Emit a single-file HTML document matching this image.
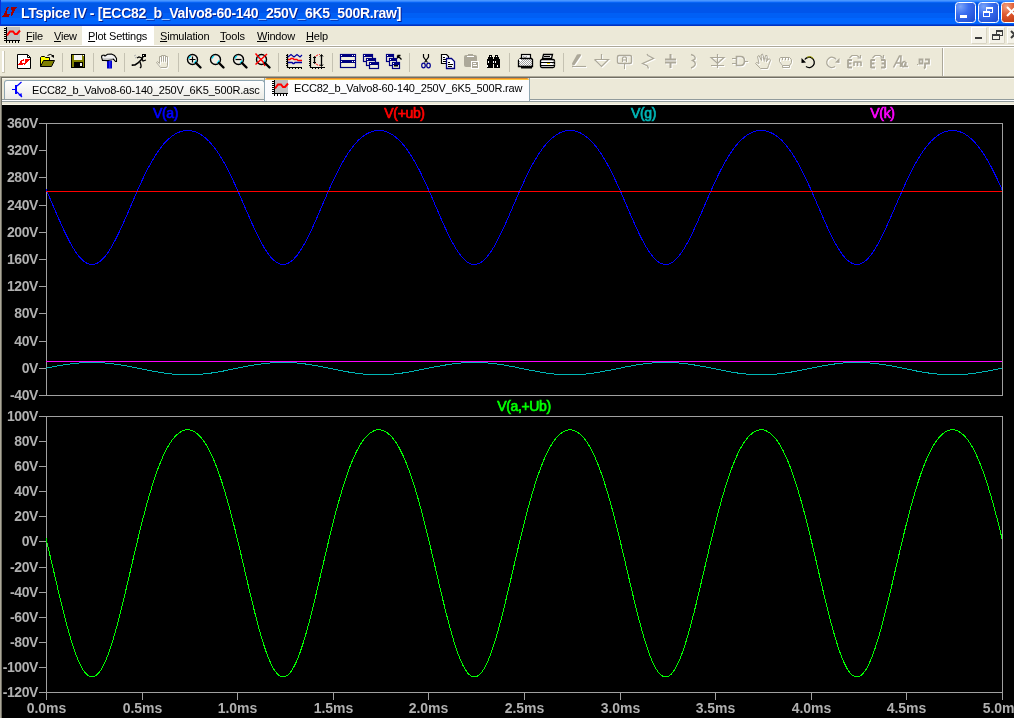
<!DOCTYPE html>
<html><head><meta charset="utf-8"><style>
html,body{margin:0;padding:0}
body{width:1014px;height:718px;overflow:hidden;position:relative;background:#ECE9D8;font-family:"Liberation Sans",sans-serif}
.abs{position:absolute}
#title{left:0;top:0;width:1014px;height:26px;background:linear-gradient(to bottom,#4896FF 0px,#4896FF 1px,#2F82FF 1px,#2F82FF 2px,#0764F5 2px,#0764F5 3px,#0058E6 3px,#0058E6 7px,#0055EB 7px,#0055EB 13px,#005FF5 13px,#005FF5 18px,#0066FF 18px,#0066FF 24px,#0046D7 24px,#0046D7 25px,#0032C3 25px,#0032C3 26px)}
#ttext{will-change:transform;left:21px;top:5px;color:#fff;font-weight:bold;font-size:14px;letter-spacing:-0.273px;white-space:pre;text-shadow:1px 1px 0 #0A1E8C}
.mi{will-change:transform;position:absolute;top:30px;font-size:11px;color:#000;letter-spacing:-0.2px;white-space:pre}
.u{text-decoration:underline;text-underline-offset:1px}
.tab{will-change:transform;position:absolute;font-size:11px;color:#000;white-space:pre;letter-spacing:-0.18px}
</style></head><body>
<div id="title" class="abs"></div>
<div class="abs" style="left:0;top:0;width:1px;height:26px;background:#0831D9"></div>
<div id="ttext" class="abs">LTspice IV - [ECC82_b_Valvo8-60-140_250V_6K5_500R.raw]</div>
<div class="abs" style="left:82px;top:26px;width:72px;height:19px;background:#fff"></div>
<span class="mi" style="left:26px"><span class="u">F</span>ile</span>
<span class="mi" style="left:54px"><span class="u">V</span>iew</span>
<span class="mi" style="left:88px"><span class="u">P</span>lot Settings</span>
<span class="mi" style="left:160px"><span class="u">S</span>imulation</span>
<span class="mi" style="left:220px"><span class="u">T</span>ools</span>
<span class="mi" style="left:257px"><span class="u">W</span>indow</span>
<span class="mi" style="left:306px"><span class="u">H</span>elp</span>
<div class="abs" style="left:0;top:45px;width:1014px;height:1px;background:#fff"></div>
<div class="abs" style="left:0;top:46px;width:1014px;height:1px;background:#ACA899"></div>
<div class="abs" style="left:0;top:47px;width:1014px;height:1px;background:#fff"></div>
<div class="abs" style="left:0;top:76px;width:1014px;height:1px;background:#ACA899"></div>
<div class="abs" style="left:1px;top:77px;width:1013px;height:1px;background:#716F64"></div>
<div class="abs" style="left:0;top:77px;width:1px;height:641px;background:#ACA899"></div>
<div class="abs" style="left:1px;top:77px;width:1px;height:641px;background:#716F64"></div>
<div class="abs" style="left:2px;top:78px;width:1012px;height:1px;background:#FAF8EE"></div>
<div class="abs" style="left:4px;top:80px;width:261px;height:19px;background:linear-gradient(#FFFFFF,#F3F3EF 60%,#ECEBE6);border:1px solid #8FA6B2;border-bottom:none;box-sizing:border-box;border-radius:3px 3px 0 0"></div>
<div class="abs" style="left:2px;top:99px;width:1012px;height:1px;background:#919B9C"></div>
<div class="abs" style="left:2px;top:100px;width:1012px;height:1px;background:#FCFCFE"></div>
<div class="abs" style="left:2px;top:101px;width:1012px;height:1px;background:#919B9C"></div>
<div class="abs" style="left:2px;top:104px;width:1012px;height:1px;background:#F8F6EA"></div>
<div class="abs" style="left:264px;top:78px;width:266px;height:23px;background:#FCFCFE;border:1px solid #8FA6B2;border-bottom:none;border-top:none;box-sizing:border-box"></div>
<div class="abs" style="left:265px;top:99px;width:264px;height:2px;background:#FCFCFE"></div>
<div class="abs" style="left:265px;top:78px;width:264px;height:2px;background:linear-gradient(#E68B2C 50%,#FFC73C 50%);border-radius:2px 2px 0 0"></div>
<span class="tab" style="left:32px;top:84px">ECC82_b_Valvo8-60-140_250V_6K5_500R.asc</span>
<span class="tab" style="left:294px;top:82px">ECC82_b_Valvo8-60-140_250V_6K5_500R.raw</span>
<div class="abs" style="left:2px;top:105px;width:1012px;height:613px;background:#000"></div>
<svg width="1014" height="718" style="position:absolute;left:0;top:0;will-change:transform">
<g stroke="#A0A0A0" stroke-width="1" fill="none" shape-rendering="crispEdges">
<rect x="46.5" y="123.5" width="956" height="272"/>
<rect x="46.5" y="416.5" width="956" height="276"/>
<line x1="39" y1="123.5" x2="46" y2="123.5"/>
<line x1="39" y1="150.5" x2="46" y2="150.5"/>
<line x1="39" y1="177.5" x2="46" y2="177.5"/>
<line x1="39" y1="205.5" x2="46" y2="205.5"/>
<line x1="39" y1="232.5" x2="46" y2="232.5"/>
<line x1="39" y1="259.5" x2="46" y2="259.5"/>
<line x1="39" y1="286.5" x2="46" y2="286.5"/>
<line x1="39" y1="313.5" x2="46" y2="313.5"/>
<line x1="39" y1="341.5" x2="46" y2="341.5"/>
<line x1="39" y1="368.5" x2="46" y2="368.5"/>
<line x1="39" y1="395.5" x2="46" y2="395.5"/>
<line x1="39" y1="416.5" x2="46" y2="416.5"/>
<line x1="39" y1="441.5" x2="46" y2="441.5"/>
<line x1="39" y1="466.5" x2="46" y2="466.5"/>
<line x1="39" y1="491.5" x2="46" y2="491.5"/>
<line x1="39" y1="516.5" x2="46" y2="516.5"/>
<line x1="39" y1="541.5" x2="46" y2="541.5"/>
<line x1="39" y1="567.5" x2="46" y2="567.5"/>
<line x1="39" y1="592.5" x2="46" y2="592.5"/>
<line x1="39" y1="617.5" x2="46" y2="617.5"/>
<line x1="39" y1="642.5" x2="46" y2="642.5"/>
<line x1="39" y1="667.5" x2="46" y2="667.5"/>
<line x1="39" y1="692.5" x2="46" y2="692.5"/>
<line x1="46.5" y1="692" x2="46.5" y2="700"/>
<line x1="142.5" y1="692" x2="142.5" y2="700"/>
<line x1="237.5" y1="692" x2="237.5" y2="700"/>
<line x1="333.5" y1="692" x2="333.5" y2="700"/>
<line x1="428.5" y1="692" x2="428.5" y2="700"/>
<line x1="524.5" y1="692" x2="524.5" y2="700"/>
<line x1="620.5" y1="692" x2="620.5" y2="700"/>
<line x1="715.5" y1="692" x2="715.5" y2="700"/>
<line x1="811.5" y1="692" x2="811.5" y2="700"/>
<line x1="906.5" y1="692" x2="906.5" y2="700"/>
<line x1="1002.5" y1="692" x2="1002.5" y2="700"/>
</g>
<g fill="none" stroke-width="1" shape-rendering="crispEdges">
<path d="M46.0,189.4 L47.0,191.7 L48.0,193.9 L49.0,196.2 L50.0,198.5 L51.0,200.9 L52.0,203.2 L53.0,205.5 L54.0,207.8 L55.0,210.1 L56.0,212.5 L57.0,214.8 L58.0,217.1 L59.0,219.4 L60.0,221.6 L61.0,223.9 L62.0,226.1 L63.0,228.3 L64.0,230.4 L65.0,232.5 L66.0,234.6 L67.0,236.6 L68.0,238.6 L69.0,240.5 L70.0,242.4 L71.0,244.2 L72.0,246.0 L73.0,247.7 L74.0,249.3 L75.0,250.9 L76.0,252.4 L77.0,253.8 L78.0,255.1 L79.0,256.4 L80.0,257.5 L81.0,258.6 L82.0,259.6 L83.0,260.5 L84.0,261.3 L85.0,262.0 L86.0,262.7 L87.0,263.2 L88.0,263.7 L89.0,264.0 L90.0,264.2 L91.0,264.4 L92.0,264.4 L93.0,264.4 L94.0,264.2 L95.0,264.0 L96.0,263.7 L97.0,263.2 L98.0,262.7 L99.0,262.0 L100.0,261.3 L101.0,260.5 L102.0,259.6 L103.0,258.6 L104.0,257.5 L105.0,256.4 L106.0,255.1 L107.0,253.8 L108.0,252.4 L109.0,250.9 L110.0,249.3 L111.0,247.7 L112.0,246.0 L113.0,244.2 L114.0,242.4 L115.0,240.5 L116.0,238.6 L117.0,236.6 L118.0,234.6 L119.0,232.5 L120.0,230.4 L121.0,228.3 L122.0,226.1 L123.0,223.9 L124.0,221.6 L125.0,219.4 L126.0,217.1 L127.0,214.8 L128.0,212.5 L129.0,210.1 L130.0,207.8 L131.0,205.5 L132.0,203.2 L133.0,200.9 L134.0,198.5 L135.0,196.2 L136.0,193.9 L137.0,191.7 L138.0,189.4 L139.0,187.2 L140.0,185.0 L141.0,182.8 L142.0,180.6 L143.0,178.5 L144.0,176.4 L145.0,174.4 L146.0,172.4 L147.0,170.4 L148.0,168.4 L149.0,166.5 L150.0,164.7 L151.0,162.9 L152.0,161.1 L153.0,159.4 L154.0,157.7 L155.0,156.1 L156.0,154.5 L157.0,153.0 L158.0,151.5 L159.0,150.1 L160.0,148.7 L161.0,147.4 L162.0,146.1 L163.0,144.9 L164.0,143.7 L165.0,142.6 L166.0,141.5 L167.0,140.5 L168.0,139.6 L169.0,138.6 L170.0,137.8 L171.0,137.0 L172.0,136.2 L173.0,135.5 L174.0,134.8 L175.0,134.2 L176.0,133.6 L177.0,133.1 L178.0,132.6 L179.0,132.2 L180.0,131.8 L181.0,131.5 L182.0,131.2 L183.0,131.0 L184.0,130.8 L185.0,130.6 L186.0,130.5 L187.0,130.5 L188.0,130.5 L189.0,130.5 L190.0,130.6 L191.0,130.7 L192.0,130.9 L193.0,131.2 L194.0,131.4 L195.0,131.8 L196.0,132.1 L197.0,132.5 L198.0,133.0 L199.0,133.5 L200.0,134.1 L201.0,134.7 L202.0,135.3 L203.0,136.0 L204.0,136.8 L205.0,137.6 L206.0,138.5 L207.0,139.4 L208.0,140.3 L209.0,141.3 L210.0,142.4 L211.0,143.5 L212.0,144.7 L213.0,145.9 L214.0,147.1 L215.0,148.5 L216.0,149.8 L217.0,151.2 L218.0,152.7 L219.0,154.2 L220.0,155.8 L221.0,157.4 L222.0,159.1 L223.0,160.8 L224.0,162.5 L225.0,164.3 L226.0,166.2 L227.0,168.1 L228.0,170.0 L229.0,172.0 L230.0,174.0 L231.0,176.0 L232.0,178.1 L233.0,180.2 L234.0,182.4 L235.0,184.5 L236.0,186.7 L237.0,189.0 L238.0,191.2 L239.0,193.5 L240.0,195.8 L241.0,198.1 L242.0,200.4 L243.0,202.7 L244.0,205.0 L245.0,207.4 L246.0,209.7 L247.0,212.0 L248.0,214.3 L249.0,216.6 L250.0,218.9 L251.0,221.2 L252.0,223.4 L253.0,225.6 L254.0,227.8 L255.0,230.0 L256.0,232.1 L257.0,234.2 L258.0,236.2 L259.0,238.2 L260.0,240.2 L261.0,242.0 L262.0,243.9 L263.0,245.6 L264.0,247.4 L265.0,249.0 L266.0,250.6 L267.0,252.1 L268.0,253.5 L269.0,254.8 L270.0,256.1 L271.0,257.3 L272.0,258.4 L273.0,259.4 L274.0,260.3 L275.0,261.2 L276.0,261.9 L277.0,262.6 L278.0,263.1 L279.0,263.6 L280.0,263.9 L281.0,264.2 L282.0,264.4 L283.0,264.4 L284.0,264.4 L285.0,264.3 L286.0,264.1 L287.0,263.7 L288.0,263.3 L289.0,262.8 L290.0,262.2 L291.0,261.5 L292.0,260.7 L293.0,259.8 L294.0,258.8 L295.0,257.7 L296.0,256.6 L297.0,255.4 L298.0,254.0 L299.0,252.6 L300.0,251.2 L301.0,249.6 L302.0,248.0 L303.0,246.3 L304.0,244.6 L305.0,242.8 L306.0,240.9 L307.0,239.0 L308.0,237.0 L309.0,235.0 L310.0,232.9 L311.0,230.8 L312.0,228.7 L313.0,226.5 L314.0,224.3 L315.0,222.1 L316.0,219.8 L317.0,217.5 L318.0,215.2 L319.0,212.9 L320.0,210.6 L321.0,208.3 L322.0,206.0 L323.0,203.6 L324.0,201.3 L325.0,199.0 L326.0,196.7 L327.0,194.4 L328.0,192.1 L329.0,189.9 L330.0,187.6 L331.0,185.4 L332.0,183.2 L333.0,181.1 L334.0,178.9 L335.0,176.8 L336.0,174.8 L337.0,172.8 L338.0,170.8 L339.0,168.8 L340.0,166.9 L341.0,165.1 L342.0,163.2 L343.0,161.5 L344.0,159.7 L345.0,158.1 L346.0,156.4 L347.0,154.8 L348.0,153.3 L349.0,151.8 L350.0,150.4 L351.0,149.0 L352.0,147.7 L353.0,146.4 L354.0,145.1 L355.0,144.0 L356.0,142.8 L357.0,141.8 L358.0,140.7 L359.0,139.7 L360.0,138.8 L361.0,137.9 L362.0,137.1 L363.0,136.3 L364.0,135.6 L365.0,134.9 L366.0,134.3 L367.0,133.7 L368.0,133.2 L369.0,132.7 L370.0,132.3 L371.0,131.9 L372.0,131.6 L373.0,131.3 L374.0,131.0 L375.0,130.8 L376.0,130.7 L377.0,130.6 L378.0,130.5 L379.0,130.5 L380.0,130.5 L381.0,130.6 L382.0,130.7 L383.0,130.9 L384.0,131.1 L385.0,131.4 L386.0,131.7 L387.0,132.0 L388.0,132.5 L389.0,132.9 L390.0,133.4 L391.0,134.0 L392.0,134.6 L393.0,135.2 L394.0,135.9 L395.0,136.6 L396.0,137.4 L397.0,138.3 L398.0,139.2 L399.0,140.1 L400.0,141.1 L401.0,142.2 L402.0,143.3 L403.0,144.4 L404.0,145.6 L405.0,146.9 L406.0,148.2 L407.0,149.5 L408.0,150.9 L409.0,152.4 L410.0,153.9 L411.0,155.5 L412.0,157.1 L413.0,158.7 L414.0,160.4 L415.0,162.2 L416.0,164.0 L417.0,165.8 L418.0,167.7 L419.0,169.6 L420.0,171.6 L421.0,173.6 L422.0,175.6 L423.0,177.7 L424.0,179.8 L425.0,181.9 L426.0,184.1 L427.0,186.3 L428.0,188.5 L429.0,190.8 L430.0,193.0 L431.0,195.3 L432.0,197.6 L433.0,199.9 L434.0,202.2 L435.0,204.6 L436.0,206.9 L437.0,209.2 L438.0,211.5 L439.0,213.9 L440.0,216.2 L441.0,218.4 L442.0,220.7 L443.0,223.0 L444.0,225.2 L445.0,227.4 L446.0,229.6 L447.0,231.7 L448.0,233.8 L449.0,235.8 L450.0,237.8 L451.0,239.8 L452.0,241.7 L453.0,243.5 L454.0,245.3 L455.0,247.0 L456.0,248.7 L457.0,250.3 L458.0,251.8 L459.0,253.2 L460.0,254.6 L461.0,255.9 L462.0,257.1 L463.0,258.2 L464.0,259.2 L465.0,260.2 L466.0,261.0 L467.0,261.8 L468.0,262.4 L469.0,263.0 L470.0,263.5 L471.0,263.9 L472.0,264.2 L473.0,264.3 L474.0,264.4 L475.0,264.4 L476.0,264.3 L477.0,264.1 L478.0,263.8 L479.0,263.4 L480.0,262.9 L481.0,262.3 L482.0,261.6 L483.0,260.8 L484.0,260.0 L485.0,259.0 L486.0,258.0 L487.0,256.8 L488.0,255.6 L489.0,254.3 L490.0,252.9 L491.0,251.5 L492.0,249.9 L493.0,248.3 L494.0,246.7 L495.0,244.9 L496.0,243.1 L497.0,241.3 L498.0,239.4 L499.0,237.4 L500.0,235.4 L501.0,233.4 L502.0,231.3 L503.0,229.1 L504.0,226.9 L505.0,224.7 L506.0,222.5 L507.0,220.3 L508.0,218.0 L509.0,215.7 L510.0,213.4 L511.0,211.1 L512.0,208.8 L513.0,206.4 L514.0,204.1 L515.0,201.8 L516.0,199.5 L517.0,197.2 L518.0,194.9 L519.0,192.6 L520.0,190.3 L521.0,188.1 L522.0,185.9 L523.0,183.7 L524.0,181.5 L525.0,179.4 L526.0,177.3 L527.0,175.2 L528.0,173.2 L529.0,171.2 L530.0,169.2 L531.0,167.3 L532.0,165.4 L533.0,163.6 L534.0,161.8 L535.0,160.1 L536.0,158.4 L537.0,156.7 L538.0,155.1 L539.0,153.6 L540.0,152.1 L541.0,150.7 L542.0,149.3 L543.0,147.9 L544.0,146.6 L545.0,145.4 L546.0,144.2 L547.0,143.1 L548.0,142.0 L549.0,140.9 L550.0,139.9 L551.0,139.0 L552.0,138.1 L553.0,137.3 L554.0,136.5 L555.0,135.8 L556.0,135.1 L557.0,134.4 L558.0,133.8 L559.0,133.3 L560.0,132.8 L561.0,132.4 L562.0,132.0 L563.0,131.6 L564.0,131.3 L565.0,131.1 L566.0,130.9 L567.0,130.7 L568.0,130.6 L569.0,130.5 L570.0,130.5 L571.0,130.5 L572.0,130.6 L573.0,130.7 L574.0,130.9 L575.0,131.1 L576.0,131.3 L577.0,131.6 L578.0,132.0 L579.0,132.4 L580.0,132.8 L581.0,133.3 L582.0,133.8 L583.0,134.4 L584.0,135.1 L585.0,135.8 L586.0,136.5 L587.0,137.3 L588.0,138.1 L589.0,139.0 L590.0,139.9 L591.0,140.9 L592.0,142.0 L593.0,143.1 L594.0,144.2 L595.0,145.4 L596.0,146.6 L597.0,147.9 L598.0,149.3 L599.0,150.7 L600.0,152.1 L601.0,153.6 L602.0,155.1 L603.0,156.7 L604.0,158.4 L605.0,160.1 L606.0,161.8 L607.0,163.6 L608.0,165.4 L609.0,167.3 L610.0,169.2 L611.0,171.2 L612.0,173.2 L613.0,175.2 L614.0,177.3 L615.0,179.4 L616.0,181.5 L617.0,183.7 L618.0,185.9 L619.0,188.1 L620.0,190.3 L621.0,192.6 L622.0,194.9 L623.0,197.2 L624.0,199.5 L625.0,201.8 L626.0,204.1 L627.0,206.4 L628.0,208.8 L629.0,211.1 L630.0,213.4 L631.0,215.7 L632.0,218.0 L633.0,220.3 L634.0,222.5 L635.0,224.7 L636.0,226.9 L637.0,229.1 L638.0,231.3 L639.0,233.4 L640.0,235.4 L641.0,237.4 L642.0,239.4 L643.0,241.3 L644.0,243.1 L645.0,244.9 L646.0,246.7 L647.0,248.3 L648.0,249.9 L649.0,251.5 L650.0,252.9 L651.0,254.3 L652.0,255.6 L653.0,256.8 L654.0,258.0 L655.0,259.0 L656.0,260.0 L657.0,260.8 L658.0,261.6 L659.0,262.3 L660.0,262.9 L661.0,263.4 L662.0,263.8 L663.0,264.1 L664.0,264.3 L665.0,264.4 L666.0,264.4 L667.0,264.3 L668.0,264.2 L669.0,263.9 L670.0,263.5 L671.0,263.0 L672.0,262.4 L673.0,261.8 L674.0,261.0 L675.0,260.2 L676.0,259.2 L677.0,258.2 L678.0,257.1 L679.0,255.9 L680.0,254.6 L681.0,253.2 L682.0,251.8 L683.0,250.3 L684.0,248.7 L685.0,247.0 L686.0,245.3 L687.0,243.5 L688.0,241.7 L689.0,239.8 L690.0,237.8 L691.0,235.8 L692.0,233.8 L693.0,231.7 L694.0,229.6 L695.0,227.4 L696.0,225.2 L697.0,223.0 L698.0,220.7 L699.0,218.4 L700.0,216.2 L701.0,213.9 L702.0,211.5 L703.0,209.2 L704.0,206.9 L705.0,204.6 L706.0,202.2 L707.0,199.9 L708.0,197.6 L709.0,195.3 L710.0,193.0 L711.0,190.8 L712.0,188.5 L713.0,186.3 L714.0,184.1 L715.0,181.9 L716.0,179.8 L717.0,177.7 L718.0,175.6 L719.0,173.6 L720.0,171.6 L721.0,169.6 L722.0,167.7 L723.0,165.8 L724.0,164.0 L725.0,162.2 L726.0,160.4 L727.0,158.7 L728.0,157.1 L729.0,155.5 L730.0,153.9 L731.0,152.4 L732.0,150.9 L733.0,149.5 L734.0,148.2 L735.0,146.9 L736.0,145.6 L737.0,144.4 L738.0,143.3 L739.0,142.2 L740.0,141.1 L741.0,140.1 L742.0,139.2 L743.0,138.3 L744.0,137.4 L745.0,136.6 L746.0,135.9 L747.0,135.2 L748.0,134.6 L749.0,134.0 L750.0,133.4 L751.0,132.9 L752.0,132.5 L753.0,132.0 L754.0,131.7 L755.0,131.4 L756.0,131.1 L757.0,130.9 L758.0,130.7 L759.0,130.6 L760.0,130.5 L761.0,130.5 L762.0,130.5 L763.0,130.6 L764.0,130.7 L765.0,130.8 L766.0,131.0 L767.0,131.3 L768.0,131.6 L769.0,131.9 L770.0,132.3 L771.0,132.7 L772.0,133.2 L773.0,133.7 L774.0,134.3 L775.0,134.9 L776.0,135.6 L777.0,136.3 L778.0,137.1 L779.0,137.9 L780.0,138.8 L781.0,139.7 L782.0,140.7 L783.0,141.8 L784.0,142.8 L785.0,144.0 L786.0,145.1 L787.0,146.4 L788.0,147.7 L789.0,149.0 L790.0,150.4 L791.0,151.8 L792.0,153.3 L793.0,154.8 L794.0,156.4 L795.0,158.1 L796.0,159.7 L797.0,161.5 L798.0,163.2 L799.0,165.1 L800.0,166.9 L801.0,168.8 L802.0,170.8 L803.0,172.8 L804.0,174.8 L805.0,176.8 L806.0,178.9 L807.0,181.1 L808.0,183.2 L809.0,185.4 L810.0,187.6 L811.0,189.9 L812.0,192.1 L813.0,194.4 L814.0,196.7 L815.0,199.0 L816.0,201.3 L817.0,203.6 L818.0,206.0 L819.0,208.3 L820.0,210.6 L821.0,212.9 L822.0,215.2 L823.0,217.5 L824.0,219.8 L825.0,222.1 L826.0,224.3 L827.0,226.5 L828.0,228.7 L829.0,230.8 L830.0,232.9 L831.0,235.0 L832.0,237.0 L833.0,239.0 L834.0,240.9 L835.0,242.8 L836.0,244.6 L837.0,246.3 L838.0,248.0 L839.0,249.6 L840.0,251.2 L841.0,252.6 L842.0,254.0 L843.0,255.4 L844.0,256.6 L845.0,257.7 L846.0,258.8 L847.0,259.8 L848.0,260.7 L849.0,261.5 L850.0,262.2 L851.0,262.8 L852.0,263.3 L853.0,263.7 L854.0,264.1 L855.0,264.3 L856.0,264.4 L857.0,264.4 L858.0,264.4 L859.0,264.2 L860.0,263.9 L861.0,263.6 L862.0,263.1 L863.0,262.6 L864.0,261.9 L865.0,261.2 L866.0,260.3 L867.0,259.4 L868.0,258.4 L869.0,257.3 L870.0,256.1 L871.0,254.8 L872.0,253.5 L873.0,252.1 L874.0,250.6 L875.0,249.0 L876.0,247.4 L877.0,245.6 L878.0,243.9 L879.0,242.0 L880.0,240.2 L881.0,238.2 L882.0,236.2 L883.0,234.2 L884.0,232.1 L885.0,230.0 L886.0,227.8 L887.0,225.6 L888.0,223.4 L889.0,221.2 L890.0,218.9 L891.0,216.6 L892.0,214.3 L893.0,212.0 L894.0,209.7 L895.0,207.4 L896.0,205.0 L897.0,202.7 L898.0,200.4 L899.0,198.1 L900.0,195.8 L901.0,193.5 L902.0,191.2 L903.0,189.0 L904.0,186.7 L905.0,184.5 L906.0,182.4 L907.0,180.2 L908.0,178.1 L909.0,176.0 L910.0,174.0 L911.0,172.0 L912.0,170.0 L913.0,168.1 L914.0,166.2 L915.0,164.3 L916.0,162.5 L917.0,160.8 L918.0,159.1 L919.0,157.4 L920.0,155.8 L921.0,154.2 L922.0,152.7 L923.0,151.2 L924.0,149.8 L925.0,148.5 L926.0,147.1 L927.0,145.9 L928.0,144.7 L929.0,143.5 L930.0,142.4 L931.0,141.3 L932.0,140.3 L933.0,139.4 L934.0,138.5 L935.0,137.6 L936.0,136.8 L937.0,136.0 L938.0,135.3 L939.0,134.7 L940.0,134.1 L941.0,133.5 L942.0,133.0 L943.0,132.5 L944.0,132.1 L945.0,131.8 L946.0,131.4 L947.0,131.2 L948.0,130.9 L949.0,130.7 L950.0,130.6 L951.0,130.5 L952.0,130.5 L953.0,130.5 L954.0,130.5 L955.0,130.6 L956.0,130.8 L957.0,131.0 L958.0,131.2 L959.0,131.5 L960.0,131.8 L961.0,132.2 L962.0,132.6 L963.0,133.1 L964.0,133.6 L965.0,134.2 L966.0,134.8 L967.0,135.5 L968.0,136.2 L969.0,137.0 L970.0,137.8 L971.0,138.6 L972.0,139.6 L973.0,140.5 L974.0,141.5 L975.0,142.6 L976.0,143.7 L977.0,144.9 L978.0,146.1 L979.0,147.4 L980.0,148.7 L981.0,150.1 L982.0,151.5 L983.0,153.0 L984.0,154.5 L985.0,156.1 L986.0,157.7 L987.0,159.4 L988.0,161.1 L989.0,162.9 L990.0,164.7 L991.0,166.5 L992.0,168.4 L993.0,170.4 L994.0,172.4 L995.0,174.4 L996.0,176.4 L997.0,178.5 L998.0,180.6 L999.0,182.8 L1000.0,185.0 L1001.0,187.2 L1002.0,189.4" stroke="#0000FF"/>
<line x1="46" y1="191.5" x2="1002" y2="191.5" stroke="#FF0000"/>
<path d="M46.0,368.2 L47.0,368.0 L48.0,367.8 L49.0,367.6 L50.0,367.4 L51.0,367.2 L52.0,367.0 L53.0,366.8 L54.0,366.6 L55.0,366.4 L56.0,366.3 L57.0,366.1 L58.0,365.9 L59.0,365.7 L60.0,365.5 L61.0,365.3 L62.0,365.2 L63.0,365.0 L64.0,364.8 L65.0,364.7 L66.0,364.5 L67.0,364.4 L68.0,364.2 L69.0,364.1 L70.0,364.0 L71.0,363.8 L72.0,363.7 L73.0,363.6 L74.0,363.5 L75.0,363.3 L76.0,363.2 L77.0,363.1 L78.0,363.0 L79.0,363.0 L80.0,362.9 L81.0,362.8 L82.0,362.7 L83.0,362.7 L84.0,362.6 L85.0,362.6 L86.0,362.5 L87.0,362.5 L88.0,362.5 L89.0,362.4 L90.0,362.4 L91.0,362.4 L92.0,362.4 L93.0,362.4 L94.0,362.4 L95.0,362.4 L96.0,362.5 L97.0,362.5 L98.0,362.5 L99.0,362.6 L100.0,362.6 L101.0,362.7 L102.0,362.7 L103.0,362.8 L104.0,362.9 L105.0,363.0 L106.0,363.0 L107.0,363.1 L108.0,363.2 L109.0,363.3 L110.0,363.5 L111.0,363.6 L112.0,363.7 L113.0,363.8 L114.0,364.0 L115.0,364.1 L116.0,364.2 L117.0,364.4 L118.0,364.5 L119.0,364.7 L120.0,364.8 L121.0,365.0 L122.0,365.2 L123.0,365.3 L124.0,365.5 L125.0,365.7 L126.0,365.9 L127.0,366.1 L128.0,366.3 L129.0,366.4 L130.0,366.6 L131.0,366.8 L132.0,367.0 L133.0,367.2 L134.0,367.4 L135.0,367.6 L136.0,367.8 L137.0,368.0 L138.0,368.2 L139.0,368.4 L140.0,368.6 L141.0,368.8 L142.0,369.0 L143.0,369.3 L144.0,369.5 L145.0,369.7 L146.0,369.9 L147.0,370.1 L148.0,370.3 L149.0,370.4 L150.0,370.6 L151.0,370.8 L152.0,371.0 L153.0,371.2 L154.0,371.4 L155.0,371.6 L156.0,371.7 L157.0,371.9 L158.0,372.1 L159.0,372.3 L160.0,372.4 L161.0,372.6 L162.0,372.7 L163.0,372.9 L164.0,373.0 L165.0,373.2 L166.0,373.3 L167.0,373.4 L168.0,373.6 L169.0,373.7 L170.0,373.8 L171.0,373.9 L172.0,374.0 L173.0,374.1 L174.0,374.2 L175.0,374.3 L176.0,374.4 L177.0,374.4 L178.0,374.5 L179.0,374.6 L180.0,374.6 L181.0,374.7 L182.0,374.7 L183.0,374.7 L184.0,374.8 L185.0,374.8 L186.0,374.8 L187.0,374.8 L188.0,374.8 L189.0,374.8 L190.0,374.8 L191.0,374.8 L192.0,374.7 L193.0,374.7 L194.0,374.7 L195.0,374.6 L196.0,374.6 L197.0,374.5 L198.0,374.4 L199.0,374.4 L200.0,374.3 L201.0,374.2 L202.0,374.1 L203.0,374.0 L204.0,373.9 L205.0,373.8 L206.0,373.7 L207.0,373.6 L208.0,373.5 L209.0,373.3 L210.0,373.2 L211.0,373.1 L212.0,372.9 L213.0,372.8 L214.0,372.6 L215.0,372.5 L216.0,372.3 L217.0,372.1 L218.0,372.0 L219.0,371.8 L220.0,371.6 L221.0,371.4 L222.0,371.2 L223.0,371.1 L224.0,370.9 L225.0,370.7 L226.0,370.5 L227.0,370.3 L228.0,370.1 L229.0,369.9 L230.0,369.7 L231.0,369.5 L232.0,369.3 L233.0,369.1 L234.0,368.9 L235.0,368.7 L236.0,368.5 L237.0,368.3 L238.0,368.1 L239.0,367.9 L240.0,367.7 L241.0,367.5 L242.0,367.3 L243.0,367.1 L244.0,366.9 L245.0,366.7 L246.0,366.5 L247.0,366.3 L248.0,366.1 L249.0,365.9 L250.0,365.7 L251.0,365.6 L252.0,365.4 L253.0,365.2 L254.0,365.0 L255.0,364.9 L256.0,364.7 L257.0,364.6 L258.0,364.4 L259.0,364.3 L260.0,364.1 L261.0,364.0 L262.0,363.8 L263.0,363.7 L264.0,363.6 L265.0,363.5 L266.0,363.4 L267.0,363.3 L268.0,363.2 L269.0,363.1 L270.0,363.0 L271.0,362.9 L272.0,362.8 L273.0,362.7 L274.0,362.7 L275.0,362.6 L276.0,362.6 L277.0,362.5 L278.0,362.5 L279.0,362.5 L280.0,362.4 L281.0,362.4 L282.0,362.4 L283.0,362.4 L284.0,362.4 L285.0,362.4 L286.0,362.4 L287.0,362.4 L288.0,362.5 L289.0,362.5 L290.0,362.6 L291.0,362.6 L292.0,362.7 L293.0,362.7 L294.0,362.8 L295.0,362.9 L296.0,362.9 L297.0,363.0 L298.0,363.1 L299.0,363.2 L300.0,363.3 L301.0,363.4 L302.0,363.5 L303.0,363.7 L304.0,363.8 L305.0,363.9 L306.0,364.1 L307.0,364.2 L308.0,364.3 L309.0,364.5 L310.0,364.7 L311.0,364.8 L312.0,365.0 L313.0,365.1 L314.0,365.3 L315.0,365.5 L316.0,365.7 L317.0,365.8 L318.0,366.0 L319.0,366.2 L320.0,366.4 L321.0,366.6 L322.0,366.8 L323.0,367.0 L324.0,367.2 L325.0,367.4 L326.0,367.6 L327.0,367.8 L328.0,368.0 L329.0,368.2 L330.0,368.4 L331.0,368.6 L332.0,368.8 L333.0,369.0 L334.0,369.2 L335.0,369.4 L336.0,369.6 L337.0,369.8 L338.0,370.0 L339.0,370.2 L340.0,370.4 L341.0,370.6 L342.0,370.8 L343.0,371.0 L344.0,371.2 L345.0,371.4 L346.0,371.5 L347.0,371.7 L348.0,371.9 L349.0,372.1 L350.0,372.2 L351.0,372.4 L352.0,372.5 L353.0,372.7 L354.0,372.9 L355.0,373.0 L356.0,373.1 L357.0,373.3 L358.0,373.4 L359.0,373.5 L360.0,373.7 L361.0,373.8 L362.0,373.9 L363.0,374.0 L364.0,374.1 L365.0,374.2 L366.0,374.3 L367.0,374.3 L368.0,374.4 L369.0,374.5 L370.0,374.5 L371.0,374.6 L372.0,374.6 L373.0,374.7 L374.0,374.7 L375.0,374.8 L376.0,374.8 L377.0,374.8 L378.0,374.8 L379.0,374.8 L380.0,374.8 L381.0,374.8 L382.0,374.8 L383.0,374.7 L384.0,374.7 L385.0,374.7 L386.0,374.6 L387.0,374.6 L388.0,374.5 L389.0,374.5 L390.0,374.4 L391.0,374.3 L392.0,374.2 L393.0,374.1 L394.0,374.0 L395.0,373.9 L396.0,373.8 L397.0,373.7 L398.0,373.6 L399.0,373.5 L400.0,373.4 L401.0,373.2 L402.0,373.1 L403.0,372.9 L404.0,372.8 L405.0,372.6 L406.0,372.5 L407.0,372.3 L408.0,372.2 L409.0,372.0 L410.0,371.8 L411.0,371.6 L412.0,371.5 L413.0,371.3 L414.0,371.1 L415.0,370.9 L416.0,370.7 L417.0,370.5 L418.0,370.3 L419.0,370.1 L420.0,369.9 L421.0,369.7 L422.0,369.5 L423.0,369.3 L424.0,369.1 L425.0,368.9 L426.0,368.7 L427.0,368.5 L428.0,368.3 L429.0,368.1 L430.0,367.9 L431.0,367.7 L432.0,367.5 L433.0,367.3 L434.0,367.1 L435.0,366.9 L436.0,366.7 L437.0,366.5 L438.0,366.3 L439.0,366.1 L440.0,366.0 L441.0,365.8 L442.0,365.6 L443.0,365.4 L444.0,365.2 L445.0,365.1 L446.0,364.9 L447.0,364.7 L448.0,364.6 L449.0,364.4 L450.0,364.3 L451.0,364.1 L452.0,364.0 L453.0,363.9 L454.0,363.7 L455.0,363.6 L456.0,363.5 L457.0,363.4 L458.0,363.3 L459.0,363.2 L460.0,363.1 L461.0,363.0 L462.0,362.9 L463.0,362.8 L464.0,362.8 L465.0,362.7 L466.0,362.6 L467.0,362.6 L468.0,362.5 L469.0,362.5 L470.0,362.5 L471.0,362.4 L472.0,362.4 L473.0,362.4 L474.0,362.4 L475.0,362.4 L476.0,362.4 L477.0,362.4 L478.0,362.4 L479.0,362.5 L480.0,362.5 L481.0,362.5 L482.0,362.6 L483.0,362.6 L484.0,362.7 L485.0,362.8 L486.0,362.8 L487.0,362.9 L488.0,363.0 L489.0,363.1 L490.0,363.2 L491.0,363.3 L492.0,363.4 L493.0,363.5 L494.0,363.6 L495.0,363.8 L496.0,363.9 L497.0,364.0 L498.0,364.2 L499.0,364.3 L500.0,364.5 L501.0,364.6 L502.0,364.8 L503.0,364.9 L504.0,365.1 L505.0,365.3 L506.0,365.5 L507.0,365.6 L508.0,365.8 L509.0,366.0 L510.0,366.2 L511.0,366.4 L512.0,366.6 L513.0,366.8 L514.0,366.9 L515.0,367.1 L516.0,367.3 L517.0,367.5 L518.0,367.7 L519.0,367.9 L520.0,368.2 L521.0,368.4 L522.0,368.6 L523.0,368.8 L524.0,369.0 L525.0,369.2 L526.0,369.4 L527.0,369.6 L528.0,369.8 L529.0,370.0 L530.0,370.2 L531.0,370.4 L532.0,370.6 L533.0,370.8 L534.0,370.9 L535.0,371.1 L536.0,371.3 L537.0,371.5 L538.0,371.7 L539.0,371.9 L540.0,372.0 L541.0,372.2 L542.0,372.4 L543.0,372.5 L544.0,372.7 L545.0,372.8 L546.0,373.0 L547.0,373.1 L548.0,373.2 L549.0,373.4 L550.0,373.5 L551.0,373.6 L552.0,373.7 L553.0,373.9 L554.0,374.0 L555.0,374.1 L556.0,374.2 L557.0,374.2 L558.0,374.3 L559.0,374.4 L560.0,374.5 L561.0,374.5 L562.0,374.6 L563.0,374.6 L564.0,374.7 L565.0,374.7 L566.0,374.7 L567.0,374.8 L568.0,374.8 L569.0,374.8 L570.0,374.8 L571.0,374.8 L572.0,374.8 L573.0,374.8 L574.0,374.7 L575.0,374.7 L576.0,374.7 L577.0,374.6 L578.0,374.6 L579.0,374.5 L580.0,374.5 L581.0,374.4 L582.0,374.3 L583.0,374.2 L584.0,374.2 L585.0,374.1 L586.0,374.0 L587.0,373.9 L588.0,373.7 L589.0,373.6 L590.0,373.5 L591.0,373.4 L592.0,373.2 L593.0,373.1 L594.0,373.0 L595.0,372.8 L596.0,372.7 L597.0,372.5 L598.0,372.4 L599.0,372.2 L600.0,372.0 L601.0,371.9 L602.0,371.7 L603.0,371.5 L604.0,371.3 L605.0,371.1 L606.0,370.9 L607.0,370.8 L608.0,370.6 L609.0,370.4 L610.0,370.2 L611.0,370.0 L612.0,369.8 L613.0,369.6 L614.0,369.4 L615.0,369.2 L616.0,369.0 L617.0,368.8 L618.0,368.6 L619.0,368.4 L620.0,368.2 L621.0,367.9 L622.0,367.7 L623.0,367.5 L624.0,367.3 L625.0,367.1 L626.0,366.9 L627.0,366.8 L628.0,366.6 L629.0,366.4 L630.0,366.2 L631.0,366.0 L632.0,365.8 L633.0,365.6 L634.0,365.5 L635.0,365.3 L636.0,365.1 L637.0,364.9 L638.0,364.8 L639.0,364.6 L640.0,364.5 L641.0,364.3 L642.0,364.2 L643.0,364.0 L644.0,363.9 L645.0,363.8 L646.0,363.6 L647.0,363.5 L648.0,363.4 L649.0,363.3 L650.0,363.2 L651.0,363.1 L652.0,363.0 L653.0,362.9 L654.0,362.8 L655.0,362.8 L656.0,362.7 L657.0,362.6 L658.0,362.6 L659.0,362.5 L660.0,362.5 L661.0,362.5 L662.0,362.4 L663.0,362.4 L664.0,362.4 L665.0,362.4 L666.0,362.4 L667.0,362.4 L668.0,362.4 L669.0,362.4 L670.0,362.5 L671.0,362.5 L672.0,362.5 L673.0,362.6 L674.0,362.6 L675.0,362.7 L676.0,362.8 L677.0,362.8 L678.0,362.9 L679.0,363.0 L680.0,363.1 L681.0,363.2 L682.0,363.3 L683.0,363.4 L684.0,363.5 L685.0,363.6 L686.0,363.7 L687.0,363.9 L688.0,364.0 L689.0,364.1 L690.0,364.3 L691.0,364.4 L692.0,364.6 L693.0,364.7 L694.0,364.9 L695.0,365.1 L696.0,365.2 L697.0,365.4 L698.0,365.6 L699.0,365.8 L700.0,366.0 L701.0,366.1 L702.0,366.3 L703.0,366.5 L704.0,366.7 L705.0,366.9 L706.0,367.1 L707.0,367.3 L708.0,367.5 L709.0,367.7 L710.0,367.9 L711.0,368.1 L712.0,368.3 L713.0,368.5 L714.0,368.7 L715.0,368.9 L716.0,369.1 L717.0,369.3 L718.0,369.5 L719.0,369.7 L720.0,369.9 L721.0,370.1 L722.0,370.3 L723.0,370.5 L724.0,370.7 L725.0,370.9 L726.0,371.1 L727.0,371.3 L728.0,371.5 L729.0,371.6 L730.0,371.8 L731.0,372.0 L732.0,372.2 L733.0,372.3 L734.0,372.5 L735.0,372.6 L736.0,372.8 L737.0,372.9 L738.0,373.1 L739.0,373.2 L740.0,373.4 L741.0,373.5 L742.0,373.6 L743.0,373.7 L744.0,373.8 L745.0,373.9 L746.0,374.0 L747.0,374.1 L748.0,374.2 L749.0,374.3 L750.0,374.4 L751.0,374.5 L752.0,374.5 L753.0,374.6 L754.0,374.6 L755.0,374.7 L756.0,374.7 L757.0,374.7 L758.0,374.8 L759.0,374.8 L760.0,374.8 L761.0,374.8 L762.0,374.8 L763.0,374.8 L764.0,374.8 L765.0,374.8 L766.0,374.7 L767.0,374.7 L768.0,374.6 L769.0,374.6 L770.0,374.5 L771.0,374.5 L772.0,374.4 L773.0,374.3 L774.0,374.3 L775.0,374.2 L776.0,374.1 L777.0,374.0 L778.0,373.9 L779.0,373.8 L780.0,373.7 L781.0,373.5 L782.0,373.4 L783.0,373.3 L784.0,373.1 L785.0,373.0 L786.0,372.9 L787.0,372.7 L788.0,372.5 L789.0,372.4 L790.0,372.2 L791.0,372.1 L792.0,371.9 L793.0,371.7 L794.0,371.5 L795.0,371.4 L796.0,371.2 L797.0,371.0 L798.0,370.8 L799.0,370.6 L800.0,370.4 L801.0,370.2 L802.0,370.0 L803.0,369.8 L804.0,369.6 L805.0,369.4 L806.0,369.2 L807.0,369.0 L808.0,368.8 L809.0,368.6 L810.0,368.4 L811.0,368.2 L812.0,368.0 L813.0,367.8 L814.0,367.6 L815.0,367.4 L816.0,367.2 L817.0,367.0 L818.0,366.8 L819.0,366.6 L820.0,366.4 L821.0,366.2 L822.0,366.0 L823.0,365.8 L824.0,365.7 L825.0,365.5 L826.0,365.3 L827.0,365.1 L828.0,365.0 L829.0,364.8 L830.0,364.7 L831.0,364.5 L832.0,364.3 L833.0,364.2 L834.0,364.1 L835.0,363.9 L836.0,363.8 L837.0,363.7 L838.0,363.5 L839.0,363.4 L840.0,363.3 L841.0,363.2 L842.0,363.1 L843.0,363.0 L844.0,362.9 L845.0,362.9 L846.0,362.8 L847.0,362.7 L848.0,362.7 L849.0,362.6 L850.0,362.6 L851.0,362.5 L852.0,362.5 L853.0,362.4 L854.0,362.4 L855.0,362.4 L856.0,362.4 L857.0,362.4 L858.0,362.4 L859.0,362.4 L860.0,362.4 L861.0,362.5 L862.0,362.5 L863.0,362.5 L864.0,362.6 L865.0,362.6 L866.0,362.7 L867.0,362.7 L868.0,362.8 L869.0,362.9 L870.0,363.0 L871.0,363.1 L872.0,363.2 L873.0,363.3 L874.0,363.4 L875.0,363.5 L876.0,363.6 L877.0,363.7 L878.0,363.8 L879.0,364.0 L880.0,364.1 L881.0,364.3 L882.0,364.4 L883.0,364.6 L884.0,364.7 L885.0,364.9 L886.0,365.0 L887.0,365.2 L888.0,365.4 L889.0,365.6 L890.0,365.7 L891.0,365.9 L892.0,366.1 L893.0,366.3 L894.0,366.5 L895.0,366.7 L896.0,366.9 L897.0,367.1 L898.0,367.3 L899.0,367.5 L900.0,367.7 L901.0,367.9 L902.0,368.1 L903.0,368.3 L904.0,368.5 L905.0,368.7 L906.0,368.9 L907.0,369.1 L908.0,369.3 L909.0,369.5 L910.0,369.7 L911.0,369.9 L912.0,370.1 L913.0,370.3 L914.0,370.5 L915.0,370.7 L916.0,370.9 L917.0,371.1 L918.0,371.2 L919.0,371.4 L920.0,371.6 L921.0,371.8 L922.0,372.0 L923.0,372.1 L924.0,372.3 L925.0,372.5 L926.0,372.6 L927.0,372.8 L928.0,372.9 L929.0,373.1 L930.0,373.2 L931.0,373.3 L932.0,373.5 L933.0,373.6 L934.0,373.7 L935.0,373.8 L936.0,373.9 L937.0,374.0 L938.0,374.1 L939.0,374.2 L940.0,374.3 L941.0,374.4 L942.0,374.4 L943.0,374.5 L944.0,374.6 L945.0,374.6 L946.0,374.7 L947.0,374.7 L948.0,374.7 L949.0,374.8 L950.0,374.8 L951.0,374.8 L952.0,374.8 L953.0,374.8 L954.0,374.8 L955.0,374.8 L956.0,374.8 L957.0,374.7 L958.0,374.7 L959.0,374.7 L960.0,374.6 L961.0,374.6 L962.0,374.5 L963.0,374.4 L964.0,374.4 L965.0,374.3 L966.0,374.2 L967.0,374.1 L968.0,374.0 L969.0,373.9 L970.0,373.8 L971.0,373.7 L972.0,373.6 L973.0,373.4 L974.0,373.3 L975.0,373.2 L976.0,373.0 L977.0,372.9 L978.0,372.7 L979.0,372.6 L980.0,372.4 L981.0,372.3 L982.0,372.1 L983.0,371.9 L984.0,371.7 L985.0,371.6 L986.0,371.4 L987.0,371.2 L988.0,371.0 L989.0,370.8 L990.0,370.6 L991.0,370.4 L992.0,370.3 L993.0,370.1 L994.0,369.9 L995.0,369.7 L996.0,369.5 L997.0,369.3 L998.0,369.0 L999.0,368.8 L1000.0,368.6 L1001.0,368.4 L1002.0,368.2" stroke="#00B4B4"/>
<line x1="46" y1="361.5" x2="1002" y2="361.5" stroke="#FF00FF"/>
<path d="M46.0,538.5 L47.0,542.7 L48.0,546.9 L49.0,551.1 L50.0,555.4 L51.0,559.6 L52.0,563.9 L53.0,568.2 L54.0,572.5 L55.0,576.8 L56.0,581.1 L57.0,585.3 L58.0,589.6 L59.0,593.8 L60.0,597.9 L61.0,602.1 L62.0,606.2 L63.0,610.2 L64.0,614.2 L65.0,618.1 L66.0,621.9 L67.0,625.6 L68.0,629.3 L69.0,632.8 L70.0,636.3 L71.0,639.7 L72.0,642.9 L73.0,646.0 L74.0,649.0 L75.0,651.9 L76.0,654.7 L77.0,657.3 L78.0,659.7 L79.0,662.0 L80.0,664.2 L81.0,666.2 L82.0,668.0 L83.0,669.7 L84.0,671.2 L85.0,672.5 L86.0,673.7 L87.0,674.7 L88.0,675.5 L89.0,676.1 L90.0,676.6 L91.0,676.9 L92.0,676.9 L93.0,676.9 L94.0,676.6 L95.0,676.1 L96.0,675.5 L97.0,674.7 L98.0,673.7 L99.0,672.5 L100.0,671.2 L101.0,669.7 L102.0,668.0 L103.0,666.2 L104.0,664.2 L105.0,662.0 L106.0,659.7 L107.0,657.3 L108.0,654.7 L109.0,651.9 L110.0,649.0 L111.0,646.0 L112.0,642.9 L113.0,639.7 L114.0,636.3 L115.0,632.8 L116.0,629.3 L117.0,625.6 L118.0,621.9 L119.0,618.1 L120.0,614.2 L121.0,610.2 L122.0,606.2 L123.0,602.1 L124.0,597.9 L125.0,593.8 L126.0,589.6 L127.0,585.3 L128.0,581.1 L129.0,576.8 L130.0,572.5 L131.0,568.2 L132.0,563.9 L133.0,559.6 L134.0,555.4 L135.0,551.1 L136.0,546.9 L137.0,542.7 L138.0,538.5 L139.0,534.4 L140.0,530.3 L141.0,526.3 L142.0,522.3 L143.0,518.4 L144.0,514.6 L145.0,510.8 L146.0,507.1 L147.0,503.4 L148.0,499.8 L149.0,496.3 L150.0,492.9 L151.0,489.6 L152.0,486.3 L153.0,483.1 L154.0,480.1 L155.0,477.1 L156.0,474.2 L157.0,471.3 L158.0,468.6 L159.0,466.0 L160.0,463.5 L161.0,461.0 L162.0,458.7 L163.0,456.4 L164.0,454.2 L165.0,452.2 L166.0,450.2 L167.0,448.3 L168.0,446.5 L169.0,444.9 L170.0,443.3 L171.0,441.8 L172.0,440.3 L173.0,439.0 L174.0,437.8 L175.0,436.6 L176.0,435.6 L177.0,434.6 L178.0,433.8 L179.0,433.0 L180.0,432.3 L181.0,431.7 L182.0,431.1 L183.0,430.7 L184.0,430.4 L185.0,430.1 L186.0,429.9 L187.0,429.8 L188.0,429.8 L189.0,429.9 L190.0,430.0 L191.0,430.3 L192.0,430.6 L193.0,431.0 L194.0,431.6 L195.0,432.1 L196.0,432.8 L197.0,433.6 L198.0,434.5 L199.0,435.4 L200.0,436.4 L201.0,437.6 L202.0,438.8 L203.0,440.1 L204.0,441.5 L205.0,443.0 L206.0,444.5 L207.0,446.2 L208.0,448.0 L209.0,449.8 L210.0,451.8 L211.0,453.8 L212.0,456.0 L213.0,458.2 L214.0,460.5 L215.0,463.0 L216.0,465.5 L217.0,468.1 L218.0,470.8 L219.0,473.6 L220.0,476.5 L221.0,479.5 L222.0,482.5 L223.0,485.7 L224.0,488.9 L225.0,492.2 L226.0,495.6 L227.0,499.1 L228.0,502.7 L229.0,506.3 L230.0,510.0 L231.0,513.8 L232.0,517.7 L233.0,521.6 L234.0,525.5 L235.0,529.5 L236.0,533.6 L237.0,537.7 L238.0,541.9 L239.0,546.0 L240.0,550.3 L241.0,554.5 L242.0,558.8 L243.0,563.1 L244.0,567.3 L245.0,571.6 L246.0,575.9 L247.0,580.2 L248.0,584.5 L249.0,588.7 L250.0,592.9 L251.0,597.1 L252.0,601.3 L253.0,605.3 L254.0,609.4 L255.0,613.4 L256.0,617.3 L257.0,621.1 L258.0,624.9 L259.0,628.6 L260.0,632.1 L261.0,635.6 L262.0,639.0 L263.0,642.3 L264.0,645.4 L265.0,648.5 L266.0,651.4 L267.0,654.1 L268.0,656.8 L269.0,659.2 L270.0,661.6 L271.0,663.8 L272.0,665.8 L273.0,667.7 L274.0,669.4 L275.0,670.9 L276.0,672.3 L277.0,673.5 L278.0,674.5 L279.0,675.3 L280.0,676.0 L281.0,676.5 L282.0,676.8 L283.0,676.9 L284.0,676.9 L285.0,676.7 L286.0,676.2 L287.0,675.6 L288.0,674.9 L289.0,673.9 L290.0,672.8 L291.0,671.5 L292.0,670.0 L293.0,668.4 L294.0,666.6 L295.0,664.6 L296.0,662.5 L297.0,660.2 L298.0,657.8 L299.0,655.2 L300.0,652.5 L301.0,649.6 L302.0,646.6 L303.0,643.5 L304.0,640.3 L305.0,637.0 L306.0,633.5 L307.0,630.0 L308.0,626.4 L309.0,622.6 L310.0,618.8 L311.0,614.9 L312.0,611.0 L313.0,607.0 L314.0,602.9 L315.0,598.8 L316.0,594.6 L317.0,590.4 L318.0,586.2 L319.0,581.9 L320.0,577.6 L321.0,573.4 L322.0,569.1 L323.0,564.8 L324.0,560.5 L325.0,556.2 L326.0,552.0 L327.0,547.7 L328.0,543.5 L329.0,539.4 L330.0,535.2 L331.0,531.2 L332.0,527.1 L333.0,523.1 L334.0,519.2 L335.0,515.3 L336.0,511.5 L337.0,507.8 L338.0,504.1 L339.0,500.5 L340.0,497.0 L341.0,493.6 L342.0,490.2 L343.0,487.0 L344.0,483.8 L345.0,480.7 L346.0,477.7 L347.0,474.7 L348.0,471.9 L349.0,469.2 L350.0,466.5 L351.0,464.0 L352.0,461.5 L353.0,459.1 L354.0,456.9 L355.0,454.7 L356.0,452.6 L357.0,450.6 L358.0,448.7 L359.0,446.9 L360.0,445.2 L361.0,443.6 L362.0,442.0 L363.0,440.6 L364.0,439.3 L365.0,438.0 L366.0,436.9 L367.0,435.8 L368.0,434.8 L369.0,433.9 L370.0,433.1 L371.0,432.4 L372.0,431.8 L373.0,431.2 L374.0,430.8 L375.0,430.4 L376.0,430.1 L377.0,429.9 L378.0,429.8 L379.0,429.8 L380.0,429.9 L381.0,430.0 L382.0,430.2 L383.0,430.6 L384.0,431.0 L385.0,431.4 L386.0,432.0 L387.0,432.7 L388.0,433.4 L389.0,434.3 L390.0,435.2 L391.0,436.2 L392.0,437.3 L393.0,438.5 L394.0,439.8 L395.0,441.2 L396.0,442.6 L397.0,444.2 L398.0,445.9 L399.0,447.6 L400.0,449.4 L401.0,451.4 L402.0,453.4 L403.0,455.5 L404.0,457.7 L405.0,460.1 L406.0,462.5 L407.0,465.0 L408.0,467.6 L409.0,470.2 L410.0,473.0 L411.0,475.9 L412.0,478.8 L413.0,481.9 L414.0,485.0 L415.0,488.3 L416.0,491.6 L417.0,495.0 L418.0,498.4 L419.0,502.0 L420.0,505.6 L421.0,509.3 L422.0,513.0 L423.0,516.9 L424.0,520.8 L425.0,524.7 L426.0,528.7 L427.0,532.8 L428.0,536.9 L429.0,541.0 L430.0,545.2 L431.0,549.4 L432.0,553.7 L433.0,557.9 L434.0,562.2 L435.0,566.5 L436.0,570.8 L437.0,575.1 L438.0,579.3 L439.0,583.6 L440.0,587.9 L441.0,592.1 L442.0,596.3 L443.0,600.4 L444.0,604.5 L445.0,608.6 L446.0,612.6 L447.0,616.5 L448.0,620.4 L449.0,624.1 L450.0,627.8 L451.0,631.4 L452.0,634.9 L453.0,638.3 L454.0,641.6 L455.0,644.8 L456.0,647.9 L457.0,650.8 L458.0,653.6 L459.0,656.2 L460.0,658.8 L461.0,661.1 L462.0,663.3 L463.0,665.4 L464.0,667.3 L465.0,669.0 L466.0,670.6 L467.0,672.0 L468.0,673.3 L469.0,674.3 L470.0,675.2 L471.0,675.9 L472.0,676.4 L473.0,676.8 L474.0,676.9 L475.0,676.9 L476.0,676.7 L477.0,676.3 L478.0,675.8 L479.0,675.0 L480.0,674.1 L481.0,673.0 L482.0,671.8 L483.0,670.3 L484.0,668.7 L485.0,666.9 L486.0,665.0 L487.0,662.9 L488.0,660.7 L489.0,658.3 L490.0,655.7 L491.0,653.0 L492.0,650.2 L493.0,647.3 L494.0,644.2 L495.0,641.0 L496.0,637.7 L497.0,634.2 L498.0,630.7 L499.0,627.1 L500.0,623.4 L501.0,619.6 L502.0,615.7 L503.0,611.8 L504.0,607.8 L505.0,603.7 L506.0,599.6 L507.0,595.4 L508.0,591.2 L509.0,587.0 L510.0,582.8 L511.0,578.5 L512.0,574.2 L513.0,569.9 L514.0,565.6 L515.0,561.3 L516.0,557.1 L517.0,552.8 L518.0,548.6 L519.0,544.4 L520.0,540.2 L521.0,536.1 L522.0,532.0 L523.0,527.9 L524.0,523.9 L525.0,520.0 L526.0,516.1 L527.0,512.3 L528.0,508.5 L529.0,504.9 L530.0,501.3 L531.0,497.7 L532.0,494.3 L533.0,490.9 L534.0,487.6 L535.0,484.4 L536.0,481.3 L537.0,478.2 L538.0,475.3 L539.0,472.5 L540.0,469.7 L541.0,467.0 L542.0,464.5 L543.0,462.0 L544.0,459.6 L545.0,457.3 L546.0,455.1 L547.0,453.0 L548.0,451.0 L549.0,449.1 L550.0,447.2 L551.0,445.5 L552.0,443.9 L553.0,442.3 L554.0,440.9 L555.0,439.5 L556.0,438.3 L557.0,437.1 L558.0,436.0 L559.0,435.0 L560.0,434.1 L561.0,433.3 L562.0,432.5 L563.0,431.9 L564.0,431.3 L565.0,430.9 L566.0,430.5 L567.0,430.2 L568.0,430.0 L569.0,429.8 L570.0,429.8 L571.0,429.8 L572.0,430.0 L573.0,430.2 L574.0,430.5 L575.0,430.9 L576.0,431.3 L577.0,431.9 L578.0,432.5 L579.0,433.3 L580.0,434.1 L581.0,435.0 L582.0,436.0 L583.0,437.1 L584.0,438.3 L585.0,439.5 L586.0,440.9 L587.0,442.3 L588.0,443.9 L589.0,445.5 L590.0,447.2 L591.0,449.1 L592.0,451.0 L593.0,453.0 L594.0,455.1 L595.0,457.3 L596.0,459.6 L597.0,462.0 L598.0,464.5 L599.0,467.0 L600.0,469.7 L601.0,472.5 L602.0,475.3 L603.0,478.2 L604.0,481.3 L605.0,484.4 L606.0,487.6 L607.0,490.9 L608.0,494.3 L609.0,497.7 L610.0,501.3 L611.0,504.9 L612.0,508.5 L613.0,512.3 L614.0,516.1 L615.0,520.0 L616.0,523.9 L617.0,527.9 L618.0,532.0 L619.0,536.1 L620.0,540.2 L621.0,544.4 L622.0,548.6 L623.0,552.8 L624.0,557.1 L625.0,561.3 L626.0,565.6 L627.0,569.9 L628.0,574.2 L629.0,578.5 L630.0,582.8 L631.0,587.0 L632.0,591.2 L633.0,595.4 L634.0,599.6 L635.0,603.7 L636.0,607.8 L637.0,611.8 L638.0,615.7 L639.0,619.6 L640.0,623.4 L641.0,627.1 L642.0,630.7 L643.0,634.2 L644.0,637.7 L645.0,641.0 L646.0,644.2 L647.0,647.3 L648.0,650.2 L649.0,653.0 L650.0,655.7 L651.0,658.3 L652.0,660.7 L653.0,662.9 L654.0,665.0 L655.0,666.9 L656.0,668.7 L657.0,670.3 L658.0,671.8 L659.0,673.0 L660.0,674.1 L661.0,675.0 L662.0,675.8 L663.0,676.3 L664.0,676.7 L665.0,676.9 L666.0,676.9 L667.0,676.8 L668.0,676.4 L669.0,675.9 L670.0,675.2 L671.0,674.3 L672.0,673.3 L673.0,672.0 L674.0,670.6 L675.0,669.0 L676.0,667.3 L677.0,665.4 L678.0,663.3 L679.0,661.1 L680.0,658.8 L681.0,656.2 L682.0,653.6 L683.0,650.8 L684.0,647.9 L685.0,644.8 L686.0,641.6 L687.0,638.3 L688.0,634.9 L689.0,631.4 L690.0,627.8 L691.0,624.1 L692.0,620.4 L693.0,616.5 L694.0,612.6 L695.0,608.6 L696.0,604.5 L697.0,600.4 L698.0,596.3 L699.0,592.1 L700.0,587.9 L701.0,583.6 L702.0,579.3 L703.0,575.1 L704.0,570.8 L705.0,566.5 L706.0,562.2 L707.0,557.9 L708.0,553.7 L709.0,549.4 L710.0,545.2 L711.0,541.0 L712.0,536.9 L713.0,532.8 L714.0,528.7 L715.0,524.7 L716.0,520.8 L717.0,516.9 L718.0,513.0 L719.0,509.3 L720.0,505.6 L721.0,502.0 L722.0,498.4 L723.0,495.0 L724.0,491.6 L725.0,488.3 L726.0,485.0 L727.0,481.9 L728.0,478.8 L729.0,475.9 L730.0,473.0 L731.0,470.2 L732.0,467.6 L733.0,465.0 L734.0,462.5 L735.0,460.1 L736.0,457.7 L737.0,455.5 L738.0,453.4 L739.0,451.4 L740.0,449.4 L741.0,447.6 L742.0,445.9 L743.0,444.2 L744.0,442.6 L745.0,441.2 L746.0,439.8 L747.0,438.5 L748.0,437.3 L749.0,436.2 L750.0,435.2 L751.0,434.3 L752.0,433.4 L753.0,432.7 L754.0,432.0 L755.0,431.4 L756.0,431.0 L757.0,430.6 L758.0,430.2 L759.0,430.0 L760.0,429.9 L761.0,429.8 L762.0,429.8 L763.0,429.9 L764.0,430.1 L765.0,430.4 L766.0,430.8 L767.0,431.2 L768.0,431.8 L769.0,432.4 L770.0,433.1 L771.0,433.9 L772.0,434.8 L773.0,435.8 L774.0,436.9 L775.0,438.0 L776.0,439.3 L777.0,440.6 L778.0,442.0 L779.0,443.6 L780.0,445.2 L781.0,446.9 L782.0,448.7 L783.0,450.6 L784.0,452.6 L785.0,454.7 L786.0,456.9 L787.0,459.1 L788.0,461.5 L789.0,464.0 L790.0,466.5 L791.0,469.2 L792.0,471.9 L793.0,474.7 L794.0,477.7 L795.0,480.7 L796.0,483.8 L797.0,487.0 L798.0,490.2 L799.0,493.6 L800.0,497.0 L801.0,500.5 L802.0,504.1 L803.0,507.8 L804.0,511.5 L805.0,515.3 L806.0,519.2 L807.0,523.1 L808.0,527.1 L809.0,531.2 L810.0,535.2 L811.0,539.4 L812.0,543.5 L813.0,547.7 L814.0,552.0 L815.0,556.2 L816.0,560.5 L817.0,564.8 L818.0,569.1 L819.0,573.4 L820.0,577.6 L821.0,581.9 L822.0,586.2 L823.0,590.4 L824.0,594.6 L825.0,598.8 L826.0,602.9 L827.0,607.0 L828.0,611.0 L829.0,614.9 L830.0,618.8 L831.0,622.6 L832.0,626.4 L833.0,630.0 L834.0,633.5 L835.0,637.0 L836.0,640.3 L837.0,643.5 L838.0,646.6 L839.0,649.6 L840.0,652.5 L841.0,655.2 L842.0,657.8 L843.0,660.2 L844.0,662.5 L845.0,664.6 L846.0,666.6 L847.0,668.4 L848.0,670.0 L849.0,671.5 L850.0,672.8 L851.0,673.9 L852.0,674.9 L853.0,675.6 L854.0,676.2 L855.0,676.7 L856.0,676.9 L857.0,676.9 L858.0,676.8 L859.0,676.5 L860.0,676.0 L861.0,675.3 L862.0,674.5 L863.0,673.5 L864.0,672.3 L865.0,670.9 L866.0,669.4 L867.0,667.7 L868.0,665.8 L869.0,663.8 L870.0,661.6 L871.0,659.2 L872.0,656.8 L873.0,654.1 L874.0,651.4 L875.0,648.5 L876.0,645.4 L877.0,642.3 L878.0,639.0 L879.0,635.6 L880.0,632.1 L881.0,628.6 L882.0,624.9 L883.0,621.1 L884.0,617.3 L885.0,613.4 L886.0,609.4 L887.0,605.3 L888.0,601.3 L889.0,597.1 L890.0,592.9 L891.0,588.7 L892.0,584.5 L893.0,580.2 L894.0,575.9 L895.0,571.6 L896.0,567.3 L897.0,563.1 L898.0,558.8 L899.0,554.5 L900.0,550.3 L901.0,546.0 L902.0,541.9 L903.0,537.7 L904.0,533.6 L905.0,529.5 L906.0,525.5 L907.0,521.6 L908.0,517.7 L909.0,513.8 L910.0,510.0 L911.0,506.3 L912.0,502.7 L913.0,499.1 L914.0,495.6 L915.0,492.2 L916.0,488.9 L917.0,485.7 L918.0,482.5 L919.0,479.5 L920.0,476.5 L921.0,473.6 L922.0,470.8 L923.0,468.1 L924.0,465.5 L925.0,463.0 L926.0,460.5 L927.0,458.2 L928.0,456.0 L929.0,453.8 L930.0,451.8 L931.0,449.8 L932.0,448.0 L933.0,446.2 L934.0,444.5 L935.0,443.0 L936.0,441.5 L937.0,440.1 L938.0,438.8 L939.0,437.6 L940.0,436.4 L941.0,435.4 L942.0,434.5 L943.0,433.6 L944.0,432.8 L945.0,432.1 L946.0,431.6 L947.0,431.0 L948.0,430.6 L949.0,430.3 L950.0,430.0 L951.0,429.9 L952.0,429.8 L953.0,429.8 L954.0,429.9 L955.0,430.1 L956.0,430.4 L957.0,430.7 L958.0,431.1 L959.0,431.7 L960.0,432.3 L961.0,433.0 L962.0,433.8 L963.0,434.6 L964.0,435.6 L965.0,436.6 L966.0,437.8 L967.0,439.0 L968.0,440.3 L969.0,441.8 L970.0,443.3 L971.0,444.9 L972.0,446.5 L973.0,448.3 L974.0,450.2 L975.0,452.2 L976.0,454.2 L977.0,456.4 L978.0,458.7 L979.0,461.0 L980.0,463.5 L981.0,466.0 L982.0,468.6 L983.0,471.3 L984.0,474.2 L985.0,477.1 L986.0,480.1 L987.0,483.1 L988.0,486.3 L989.0,489.6 L990.0,492.9 L991.0,496.3 L992.0,499.8 L993.0,503.4 L994.0,507.1 L995.0,510.8 L996.0,514.6 L997.0,518.4 L998.0,522.3 L999.0,526.3 L1000.0,530.3 L1001.0,534.4 L1002.0,538.5" stroke="#00FF00"/>
</g>
<g font-family="Liberation Sans" font-size="14" font-weight="bold" fill="#B0B0B0">
<text x="38" y="128" text-anchor="end" letter-spacing="-0.4">360V</text>
<text x="38" y="155" text-anchor="end" letter-spacing="-0.4">320V</text>
<text x="38" y="182" text-anchor="end" letter-spacing="-0.4">280V</text>
<text x="38" y="210" text-anchor="end" letter-spacing="-0.4">240V</text>
<text x="38" y="237" text-anchor="end" letter-spacing="-0.4">200V</text>
<text x="38" y="264" text-anchor="end" letter-spacing="-0.4">160V</text>
<text x="38" y="291" text-anchor="end" letter-spacing="-0.4">120V</text>
<text x="38" y="318" text-anchor="end" letter-spacing="-0.4">80V</text>
<text x="38" y="346" text-anchor="end" letter-spacing="-0.4">40V</text>
<text x="38" y="373" text-anchor="end" letter-spacing="-0.4">0V</text>
<text x="38" y="400" text-anchor="end" letter-spacing="-0.4">-40V</text>
<text x="38" y="421" text-anchor="end" letter-spacing="-0.4">100V</text>
<text x="38" y="446" text-anchor="end" letter-spacing="-0.4">80V</text>
<text x="38" y="471" text-anchor="end" letter-spacing="-0.4">60V</text>
<text x="38" y="496" text-anchor="end" letter-spacing="-0.4">40V</text>
<text x="38" y="521" text-anchor="end" letter-spacing="-0.4">20V</text>
<text x="38" y="546" text-anchor="end" letter-spacing="-0.4">0V</text>
<text x="38" y="572" text-anchor="end" letter-spacing="-0.4">-20V</text>
<text x="38" y="597" text-anchor="end" letter-spacing="-0.4">-40V</text>
<text x="38" y="622" text-anchor="end" letter-spacing="-0.4">-60V</text>
<text x="38" y="647" text-anchor="end" letter-spacing="-0.4">-80V</text>
<text x="38" y="672" text-anchor="end" letter-spacing="-0.4">-100V</text>
<text x="38" y="697" text-anchor="end" letter-spacing="-0.4">-120V</text>
<text x="46.5" y="713" text-anchor="middle">0.0ms</text>
<text x="142.5" y="713" text-anchor="middle">0.5ms</text>
<text x="237.5" y="713" text-anchor="middle">1.0ms</text>
<text x="333.5" y="713" text-anchor="middle">1.5ms</text>
<text x="428.5" y="713" text-anchor="middle">2.0ms</text>
<text x="524.5" y="713" text-anchor="middle">2.5ms</text>
<text x="620.5" y="713" text-anchor="middle">3.0ms</text>
<text x="715.5" y="713" text-anchor="middle">3.5ms</text>
<text x="811.5" y="713" text-anchor="middle">4.0ms</text>
<text x="906.5" y="713" text-anchor="middle">4.5ms</text>
<text x="1002.5" y="713" text-anchor="middle">5.0ms</text>
</g>
<g font-family="Liberation Sans" font-size="14" letter-spacing="-0.35" stroke-width="0.7">
<text x="165.5" y="118" text-anchor="middle" fill="#0000FF" stroke="#0000FF">V(a)</text>
<text x="404.5" y="118" text-anchor="middle" fill="#FF0000" stroke="#FF0000">V(+ub)</text>
<text x="643.5" y="118" text-anchor="middle" fill="#00B4B4" stroke="#00B4B4">V(g)</text>
<text x="882.5" y="118" text-anchor="middle" fill="#FF00FF" stroke="#FF00FF">V(k)</text>
<text x="524" y="411" text-anchor="middle" fill="#00FF00" stroke="#00FF00">V(a,+Ub)</text>
</g>
<g fill="#A00000" shape-rendering="crispEdges"><polygon points="7,7 9.5,7 7.5,10 6.5,14 10,14 9,17 2,17 4.5,13"/><polygon points="10.5,7 17.5,7 15.5,9.5 13.5,13 12,16 10.5,16 11.5,12 13,9.5 10.5,9.5"/></g>
<defs><radialGradient id="gb" cx="0.25" cy="0.2" r="0.9"><stop offset="0" stop-color="#7BA4F8"/><stop offset="0.45" stop-color="#3A6EF0"/><stop offset="1" stop-color="#2352D6"/></radialGradient><radialGradient id="gc" cx="0.25" cy="0.2" r="0.9"><stop offset="0" stop-color="#F0A080"/><stop offset="0.45" stop-color="#E05A30"/><stop offset="1" stop-color="#C03810"/></radialGradient></defs>
<rect x="955.5" y="2.5" width="20" height="20" rx="3" fill="url(#gb)" stroke="#fff"/><rect x="960" y="15" width="7" height="3" fill="#fff"/><rect x="978.5" y="2.5" width="20" height="20" rx="3" fill="url(#gb)" stroke="#fff"/><rect x="986.5" y="7.5" width="6" height="5" fill="none" stroke="#fff"/><rect x="986" y="7" width="7" height="2" fill="#fff"/><rect x="983.5" y="11.5" width="6" height="5" fill="#2D63F2" stroke="#fff"/><rect x="983" y="11" width="7" height="2" fill="#fff"/><rect x="1001.5" y="2.5" width="20" height="20" rx="3" fill="url(#gc)" stroke="#fff"/><path d="M1007,7 L1016,16 M1016,7 L1007,16" stroke="#fff" stroke-width="2"/>
<g transform="translate(4,27)" shape-rendering="crispEdges"><rect x="3" y="0" width="13" height="13" fill="#C0C0C0"/><rect x="2" y="0" width="1" height="16" fill="#000"/><rect x="0" y="13" width="16" height="1" fill="#000"/><rect x="0" y="1" width="2" height="1" fill="#000"/><rect x="0" y="3" width="2" height="1" fill="#000"/><rect x="0" y="5" width="2" height="1" fill="#000"/><rect x="0" y="7" width="2" height="1" fill="#000"/><rect x="0" y="9" width="2" height="1" fill="#000"/><rect x="0" y="11" width="2" height="1" fill="#000"/><rect x="2" y="14" width="1" height="2" fill="#000"/><rect x="5" y="14" width="1" height="2" fill="#000"/><rect x="8" y="14" width="1" height="2" fill="#000"/><rect x="11" y="14" width="1" height="2" fill="#000"/><rect x="14" y="14" width="1" height="2" fill="#000"/></g><path d="M7,35.5 L10,31.5 H13 L15,34 H17 L20,30.5" fill="none" stroke="#FF0000" stroke-width="2"/>
<g transform="translate(272,80)" shape-rendering="crispEdges"><rect x="3" y="0" width="13" height="13" fill="#C0C0C0"/><rect x="2" y="0" width="1" height="16" fill="#000"/><rect x="0" y="13" width="16" height="1" fill="#000"/><rect x="0" y="1" width="2" height="1" fill="#000"/><rect x="0" y="3" width="2" height="1" fill="#000"/><rect x="0" y="5" width="2" height="1" fill="#000"/><rect x="0" y="7" width="2" height="1" fill="#000"/><rect x="0" y="9" width="2" height="1" fill="#000"/><rect x="0" y="11" width="2" height="1" fill="#000"/><rect x="2" y="14" width="1" height="2" fill="#000"/><rect x="5" y="14" width="1" height="2" fill="#000"/><rect x="8" y="14" width="1" height="2" fill="#000"/><rect x="11" y="14" width="1" height="2" fill="#000"/><rect x="14" y="14" width="1" height="2" fill="#000"/></g><path d="M275,88.5 L278,84.5 H281 L283,87 H285 L288,83.5" fill="none" stroke="#FF0000" stroke-width="2"/>
<g fill="#0000FF" stroke="#0000FF"><rect x="15" y="85" width="2" height="9" stroke="none"/><path d="M12,89.5 H15 M17,86 L21.5,82 M17,92 L22,97" fill="none" stroke-width="1.2"/><polygon points="18.5,95 21.5,93 22,97" stroke="none"/></g>
<rect x="971.5" y="27.5" width="15" height="16" fill="#F4F2E8" stroke="#fff"/><path d="M971.5,43.5 H986.5 V27.5" fill="none" stroke="#D8D4C4"/><rect x="975" y="37" width="7" height="2" fill="#3C3C3C"/><rect x="989.5" y="27.5" width="15" height="16" fill="#F4F2E8" stroke="#fff"/><path d="M989.5,43.5 H1004.5 V27.5" fill="none" stroke="#D8D4C4"/><rect x="996.5" y="30.5" width="6" height="5" fill="none" stroke="#3C3C3C"/><rect x="996" y="30" width="7" height="2" fill="#3C3C3C"/><rect x="992.5" y="34.5" width="7" height="5" fill="#F4F2E8" stroke="#3C3C3C"/><rect x="992" y="34" width="8" height="2" fill="#3C3C3C"/><rect x="1007.5" y="27.5" width="15" height="16" fill="#F4F2E8" stroke="#fff"/><path d="M1007.5,43.5 H1022.5 V27.5" fill="none" stroke="#D8D4C4"/><path d="M1011,31 L1018,38 M1018,31 L1011,38" stroke="#3C3C3C" stroke-width="2"/>
<g shape-rendering="crispEdges">
<rect x="2" y="51" width="1" height="21" fill="#fff"/><rect x="3" y="51" width="1" height="21" fill="#fff"/><rect x="4" y="51" width="1" height="21" fill="#C8C4B0"/><rect x="2" y="72" width="3" height="1" fill="#C8C4B0"/>
<rect x="62" y="53" width="1" height="19" fill="#C5C2B2"/>
<rect x="93" y="53" width="1" height="19" fill="#C5C2B2"/>
<rect x="124" y="53" width="1" height="19" fill="#C5C2B2"/>
<rect x="178" y="53" width="1" height="19" fill="#C5C2B2"/>
<rect x="278" y="53" width="1" height="19" fill="#C5C2B2"/>
<rect x="332" y="53" width="1" height="19" fill="#C5C2B2"/>
<rect x="409" y="53" width="1" height="19" fill="#C5C2B2"/>
<rect x="509" y="53" width="1" height="19" fill="#C5C2B2"/>
<rect x="563" y="53" width="1" height="19" fill="#C5C2B2"/>
<rect x="942" y="48" width="1" height="28" fill="#ACA899"/><rect x="943" y="48" width="1" height="28" fill="#fff"/>
</g>
<g transform="translate(16,53)">
<path d="M1.5,1.5 H11.5 L14.5,4.5 V15.5 H1.5 Z" fill="#fff" stroke="#000"/>
<path d="M11.5,1.5 V4.5 H14.5" fill="none" stroke="#000"/>
<g fill="#FF0000"><rect x="7" y="6" width="1" height="1"/><rect x="9" y="6" width="5" height="1"/><rect x="5" y="7" width="3" height="1"/><rect x="9" y="7" width="4" height="1"/><rect x="4" y="8" width="2" height="1"/><rect x="9" y="8" width="3" height="1"/><rect x="4" y="9" width="2" height="1"/><rect x="9" y="9" width="2" height="1"/><rect x="3" y="10" width="5" height="1"/><rect x="8" y="10" width="2" height="1"/><rect x="2" y="11" width="5" height="1"/><rect x="8" y="11" width="1" height="1"/></g>
</g>
<g transform="translate(39,53)">
<path d="M1.5,13.5 V4.5 L2.5,3.5 H5.5 L6.5,4.5 H10.5 V7.5" fill="#FFFF00" stroke="#000"/>
<polygon points="1.5,13.5 4.5,7.5 15.5,7.5 12.5,13.5" fill="#808000" stroke="#000"/>
<path d="M8.5,2.5 Q11,0 14.5,3" fill="none" stroke="#000"/>
<polygon points="12,3 15,2 15,5" fill="#000"/>
</g>
<g transform="translate(70,53)">
<rect x="1" y="1" width="14" height="14" fill="#000"/>
<rect x="2" y="2" width="12" height="12" fill="#808000"/>
<rect x="4" y="2" width="8" height="5" fill="#F4F4F4"/>
<rect x="4" y="9" width="9" height="5" fill="#000"/>
<rect x="10" y="10" width="2" height="3" fill="#F4F4F4"/>
<rect x="13" y="2" width="1" height="1" fill="#fff"/>
</g>
<g transform="translate(101,53)">
<rect x="6" y="7.5" width="5" height="8" fill="#0000C8"/>
<rect x="8" y="8" width="1.5" height="7" fill="#2A2AFF"/>
<path d="M0.5,4 L1,2.5 L3,2 L4,3 L6.5,1.2 L10.5,1 L13.5,2.5 L15.5,5.5 V8.5 L14.5,8.5 L12.5,6.2 L9.5,6.8 L6.5,7.6 L3.5,7.4 L1.5,7.4 Z" fill="#F0F0F0" stroke="#000" stroke-width="1.1"/>
<path d="M2,6 H12" stroke="#B8B8B8" stroke-width="1.2"/>
</g>
<g transform="translate(132,53)">
<rect x="10" y="1" width="4" height="3" fill="#000"/>
<rect x="11" y="2" width="1" height="1" fill="#fff"/>
<path d="M11,4 L9,7 L6,10 L3,12 L0.5,12 L0.5,13" fill="none" stroke="#000" stroke-width="1.6"/>
<path d="M5,5 L7,4 L10,5 M10,6 L11,8 L14,7 M8,9 L9,12 L9,14 L8,15" fill="none" stroke="#000" stroke-width="1.3"/>
<path d="M2,3 L4,2 M3,5 L5,4" fill="none" stroke="#B0B0B0"/>
</g>
<g transform="translate(155,53)"><g transform="translate(1,1)" stroke="#FFFFFF" fill="#FFFFFF">
<path d="M5.5,14.5 L1.5,9.5 L2.5,8.5 L4.5,10.5 V3.5 H6.5 V8.5 V2.5 H8.5 V8.5 V2.5 H10.5 V8.5 V3.5 H12.5 V12.5 L11.5,14.5 Z" fill="none"/>
</g><g stroke="#ACA899" fill="#ACA899">
<path d="M5.5,14.5 L1.5,9.5 L2.5,8.5 L4.5,10.5 V3.5 H6.5 V8.5 V2.5 H8.5 V8.5 V2.5 H10.5 V8.5 V3.5 H12.5 V12.5 L11.5,14.5 Z" fill="none"/>
</g></g>
<g transform="translate(186,53)"><circle cx="6.5" cy="6.5" r="5" fill="#F0EEE4" stroke="#000" stroke-width="1.4"/><path d="M3,5.5 A4,4 0 0 1 5,3" fill="none" stroke="#00E0FF" stroke-width="1.2"/><path d="M10,7.5 A4,4 0 0 1 8,10" fill="none" stroke="#00E0FF" stroke-width="1.2"/><path d="M6.5,3.5 V9.5 M3.5,6.5 H9.5" stroke="#000" stroke-width="1.2"/><path d="M10,10 L14.5,14.5" stroke="#000" stroke-width="2.4" stroke-linecap="round"/></g>
<g transform="translate(209,53)"><circle cx="6.5" cy="6.5" r="5" fill="#F0EEE4" stroke="#000" stroke-width="1.4"/><path d="M3,5.5 A4,4 0 0 1 5,3" fill="none" stroke="#00E0FF" stroke-width="1.2"/><path d="M10,7.5 A4,4 0 0 1 8,10" fill="none" stroke="#00E0FF" stroke-width="1.2"/><path d="M10,10 L14.5,14.5" stroke="#000" stroke-width="2.4" stroke-linecap="round"/></g>
<g transform="translate(232,53)"><circle cx="6.5" cy="6.5" r="5" fill="#F0EEE4" stroke="#000" stroke-width="1.4"/><path d="M3,5.5 A4,4 0 0 1 5,3" fill="none" stroke="#00E0FF" stroke-width="1.2"/><path d="M10,7.5 A4,4 0 0 1 8,10" fill="none" stroke="#00E0FF" stroke-width="1.2"/><path d="M3.5,6.5 H9.5" stroke="#000" stroke-width="1.2"/><path d="M10,10 L14.5,14.5" stroke="#000" stroke-width="2.4" stroke-linecap="round"/></g>
<g transform="translate(255,53)"><circle cx="6.5" cy="6.5" r="5" fill="#F0EEE4" stroke="#000" stroke-width="1.4"/><path d="M3,5.5 A4,4 0 0 1 5,3" fill="none" stroke="#00E0FF" stroke-width="1.2"/><path d="M10,7.5 A4,4 0 0 1 8,10" fill="none" stroke="#00E0FF" stroke-width="1.2"/><path d="M0.5,0.5 L9.5,10.5 M12,1 L0.5,11.5 M8.5,9.5 L10,13" stroke="#FF0000" stroke-width="1.5"/><path d="M10,10 L14.5,14.5" stroke="#000" stroke-width="2.4" stroke-linecap="round"/></g>
<g transform="translate(286,53)">
<path d="M1.5,1 V14.5 H16" fill="none" stroke="#000" stroke-width="1.2"/>
<path d="M0,2.5 H1 M0,4.5 H1 M0,6.5 H1 M0,8.5 H1 M0,10.5 H1 M0,12.5 H1 M3,15.5 H4 M6,15.5 H7 M9,15.5 H10 M12,15.5 H13 M15,15.5 H16" stroke="#000"/>
<path d="M2,4 L5,1.5 L8,4 L11,1.5 L14,4 L16,2" fill="none" stroke="#0000A0" stroke-width="1.1"/>
<path d="M2,6.5 H4 L5,5.5 H7 L8,6.5 H11 L12,7.5 H16" fill="none" stroke="#FF0000" stroke-width="1.3"/>
<path d="M2,9.5 H6 L7,10.5 H8 L9,9.5 H16" fill="none" stroke="#0000A0" stroke-width="1.5"/>
</g>
<g transform="translate(309,53)">
<path d="M1.5,1 V14.5 H16" fill="none" stroke="#000" stroke-width="1.2"/>
<path d="M0,2.5 H1 M0,4.5 H1 M0,6.5 H1 M0,8.5 H1 M0,10.5 H1 M0,12.5 H1 M3,15.5 H4 M6,15.5 H7 M9,15.5 H10 M12,15.5 H13" stroke="#000"/>
<path d="M5,5 Q8,1.5 11,1.5 M5,9 Q8,12.5 11,12.5" fill="none" stroke="#FF0000" stroke-dasharray="2,1"/>
<path d="M5.5,4 V10" stroke="#000" stroke-width="1.3"/><path d="M4,5 L5.5,3.5 L7,5 M4,9 L5.5,10.5 L7,9" fill="none" stroke="#000"/>
<path d="M12.5,2 V13" stroke="#000" stroke-width="1.3"/><path d="M11,3.5 L12.5,1.5 L14,3.5 M11,11.5 L12.5,13.5 L14,11.5" fill="none" stroke="#000"/>
</g>
<g transform="translate(340,53)">
<rect x="0.5" y="1.5" width="15" height="13" fill="#F2EFDC" stroke="#000080" stroke-width="1.2"/>
<rect x="0" y="1" width="16" height="3" fill="#000080"/>
<rect x="0" y="7" width="16" height="3" fill="#000080"/>
<rect x="1" y="2" width="1" height="1" fill="#fff"/><rect x="12" y="2" width="1" height="1" fill="#fff"/><rect x="14" y="2" width="1" height="1" fill="#fff"/>
<rect x="1" y="8" width="1" height="1" fill="#fff"/><rect x="12" y="8" width="1" height="1" fill="#fff"/><rect x="14" y="8" width="1" height="1" fill="#fff"/>
</g>
<g transform="translate(363,53)"><rect x="0.5" y="1.5" width="9" height="7" fill="#F2EFDC" stroke="#000080" stroke-width="1.2"/><rect x="0" y="1" width="10" height="3" fill="#000080"/><rect x="1" y="2" width="1" height="1" fill="#fff"/><rect x="3.5" y="5.5" width="9" height="7" fill="#F2EFDC" stroke="#000080" stroke-width="1.2"/><rect x="3" y="5" width="10" height="3" fill="#000080"/><rect x="4" y="6" width="1" height="1" fill="#fff"/><rect x="6.5" y="9.5" width="9" height="6" fill="#F2EFDC" stroke="#000080" stroke-width="1.2"/><rect x="6" y="9" width="10" height="3" fill="#000080"/><rect x="7" y="10" width="1" height="1" fill="#fff"/></g>
<g transform="translate(386,53)"><rect x="0.5" y="1.5" width="7" height="7" fill="#F2EFDC" stroke="#000080" stroke-width="1.2"/><rect x="0" y="1" width="8" height="3" fill="#000080"/><rect x="1" y="2" width="1" height="1" fill="#fff"/><rect x="3.5" y="5.5" width="7" height="7" fill="#F2EFDC" stroke="#000080" stroke-width="1.2"/><rect x="3" y="5" width="8" height="3" fill="#000080"/><rect x="4" y="6" width="1" height="1" fill="#fff"/><rect x="6.5" y="9.5" width="7" height="6" fill="#F2EFDC" stroke="#000080" stroke-width="1.2"/><rect x="6" y="9" width="8" height="3" fill="#000080"/><rect x="7" y="10" width="1" height="1" fill="#fff"/><rect x="8" y="12" width="4" height="1.5" fill="#000"/><path d="M15.5,6.5 L12,3 M11.5,2.5 V5.5 M11.5,2.5 H14.5" stroke="#000" stroke-width="1.3" fill="none"/></g>
<g transform="translate(417,53)">
<path d="M6.5,1 V4 L10.5,9.5 M11.5,1 V4 L7.5,9.5" fill="none" stroke="#000" stroke-width="1.2"/>
<ellipse cx="6.5" cy="12.5" rx="1.8" ry="2.3" fill="none" stroke="#000090" stroke-width="1.2"/>
<ellipse cx="11.5" cy="12.5" rx="1.8" ry="2.3" fill="none" stroke="#000090" stroke-width="1.2"/>
</g>
<g transform="translate(440,53)">
<path d="M1.5,1.5 H6.5 L8.5,3.5 V10.5 H1.5 Z" fill="#fff" stroke="#000" stroke-width="1.2"/>
<path d="M3,4.5 H5 M3,6.5 H7 M3,8.5 H6" stroke="#000"/>
<path d="M6.5,5.5 H11.5 L14.5,8.5 V15.5 H6.5 Z" fill="#fff" stroke="#000080" stroke-width="1.3"/>
<path d="M8,9.5 H10 M8,11.5 H13 M8,13.5 H12" stroke="#000"/>
</g>
<g transform="translate(463,53)">
<rect x="1" y="2" width="13" height="12" rx="2" fill="#ACA899"/>
<rect x="5" y="1" width="5" height="2" fill="#ACA899"/>
<rect x="4" y="3" width="7" height="1" fill="#fff"/>
<rect x="8" y="8" width="8" height="8" fill="#fff"/>
<rect x="9" y="9" width="6" height="6" fill="#ACA899"/>
<rect x="10" y="10" width="3" height="1" fill="#fff"/><rect x="10" y="12" width="4" height="1" fill="#fff"/>
</g>
<g transform="translate(486,53)">
<rect x="3" y="2" width="3" height="3" fill="#000"/><rect x="9" y="2" width="3" height="3" fill="#000"/>
<rect x="2" y="4" width="5" height="4" fill="#000"/><rect x="8" y="4" width="5" height="4" fill="#000"/>
<rect x="1" y="6" width="6" height="9" fill="#000"/><rect x="8" y="6" width="6" height="9" fill="#000"/>
<rect x="6" y="6" width="3" height="5" fill="#000"/>
<rect x="4" y="3" width="1" height="1" fill="#fff"/><rect x="10" y="3" width="1" height="1" fill="#fff"/>
<rect x="2" y="8" width="1" height="2" fill="#fff"/><rect x="7" y="8" width="1" height="2" fill="#fff"/><rect x="9" y="8" width="1" height="2" fill="#fff"/>
<rect x="1" y="12" width="1" height="2" fill="#fff"/><rect x="11" y="12" width="1" height="2" fill="#fff"/>
</g>
<g transform="translate(517,53)">
<defs><pattern id="dith" width="2" height="2" patternUnits="userSpaceOnUse"><rect width="2" height="2" fill="#fff"/><rect width="1" height="1" fill="#A0A0A0"/><rect x="1" y="1" width="1" height="1" fill="#A0A0A0"/></pattern></defs>
<rect x="4.5" y="1.5" width="9" height="5" fill="#fff" stroke="#000" stroke-width="1.2"/>
<path d="M6,3.5 L8,4.5 L10,3.5" fill="none" stroke="#888"/>
<path d="M1.5,7.5 L3.5,5.5 H14.5 L15.5,6.5 V13.5 H1.5 Z" fill="url(#dith)" stroke="#000" stroke-width="1.3"/>
<rect x="4" y="14" width="11" height="1.5" fill="#000"/>
<rect x="2" y="6" width="2" height="2" fill="#fff"/>
</g>
<g transform="translate(540,53)">
<path d="M3.5,1.5 H12.5 L11.5,5.5 H2.5 Z" fill="#fff" stroke="#000" stroke-width="1.3"/>
<path d="M4,3.5 H10" stroke="#000"/>
<rect x="0.5" y="6.5" width="14" height="8" rx="1.5" fill="#fff" stroke="#000" stroke-width="1.3"/>
<rect x="1" y="9" width="13" height="1" fill="#000"/><rect x="1" y="12" width="13" height="1" fill="#000"/>
<rect x="7" y="10" width="3" height="1" fill="#FFE000"/>
<path d="M12.5,7 L14.5,9 M12.5,10 L14.5,12" stroke="#888"/>
</g>
<g transform="translate(571,53)"><g transform="translate(1,1)" stroke="#FFFFFF" fill="#FFFFFF"><polygon points="6,1.5 9.5,1 10,2.5 3.5,12 1.5,12.5 1,10.5" stroke="none"/><path d="M1,13.5 H15" fill="none" stroke-width="1.1"/></g><g stroke="#ACA899" fill="#ACA899"><polygon points="6,1.5 9.5,1 10,2.5 3.5,12 1.5,12.5 1,10.5" stroke="none"/><path d="M1,13.5 H15" fill="none" stroke-width="1.1"/></g></g>
<g transform="translate(594,53)"><g transform="translate(1,1)" stroke="#FFFFFF" fill="#FFFFFF"><path d="M7.5,1 V6.5 M0.5,6.5 H14.5 L7.5,13.5 L0.5,6.5" fill="none" stroke-width="1.2"/></g><g stroke="#ACA899" fill="#ACA899"><path d="M7.5,1 V6.5 M0.5,6.5 H14.5 L7.5,13.5 L0.5,6.5" fill="none" stroke-width="1.2"/></g></g>
<g transform="translate(617,53)"><g transform="translate(1,1)" stroke="#FFFFFF" fill="#FFFFFF"><rect x="0.5" y="2.5" width="14" height="8" rx="1.5" fill="none" stroke-width="1.4"/><path d="M7.5,11 V16" fill="none"/><path d="M5.5,9 V5 L6.5,4 H8.5 L9.5,5 V9 M5.5,7 H9.5" fill="none" stroke-width="1.2"/></g><g stroke="#ACA899" fill="#ACA899"><rect x="0.5" y="2.5" width="14" height="8" rx="1.5" fill="none" stroke-width="1.4"/><path d="M7.5,11 V16" fill="none"/><path d="M5.5,9 V5 L6.5,4 H8.5 L9.5,5 V9 M5.5,7 H9.5" fill="none" stroke-width="1.2"/></g></g>
<g transform="translate(640,53)"><g transform="translate(1,1)" stroke="#FFFFFF" fill="#FFFFFF"><path d="M7,1 L8,2.5 L13.5,5.5 L2.5,10.5 L7.5,13 L8.5,15.5" fill="none" stroke-width="1.3"/></g><g stroke="#ACA899" fill="#ACA899"><path d="M7,1 L8,2.5 L13.5,5.5 L2.5,10.5 L7.5,13 L8.5,15.5" fill="none" stroke-width="1.3"/></g></g>
<g transform="translate(663,53)"><g transform="translate(1,1)" stroke="#FFFFFF" fill="#FFFFFF"><path d="M7.5,1 V6 M7.5,10 V15 M2,6.5 H13 M2,9.5 H13" fill="none" stroke-width="2"/></g><g stroke="#ACA899" fill="#ACA899"><path d="M7.5,1 V6 M7.5,10 V15 M2,6.5 H13 M2,9.5 H13" fill="none" stroke-width="2"/></g></g>
<g transform="translate(686,53)"><g transform="translate(1,1)" stroke="#FFFFFF" fill="#FFFFFF"><path d="M5,1.5 Q10,3 9,6 L6.5,7.5 Q10,9 9,12 Q8,14 5,15" fill="none" stroke-width="1.4"/></g><g stroke="#ACA899" fill="#ACA899"><path d="M5,1.5 Q10,3 9,6 L6.5,7.5 Q10,9 9,12 Q8,14 5,15" fill="none" stroke-width="1.4"/></g></g>
<g transform="translate(709,53)"><g transform="translate(1,1)" stroke="#FFFFFF" fill="#FFFFFF"><path d="M8.5,1 V15 M2,4.5 H15 L8.5,10.5 Z M2,12.5 H15" fill="none" stroke-width="1.2"/></g><g stroke="#ACA899" fill="#ACA899"><path d="M8.5,1 V15 M2,4.5 H15 L8.5,10.5 Z M2,12.5 H15" fill="none" stroke-width="1.2"/></g></g>
<g transform="translate(732,53)"><g transform="translate(1,1)" stroke="#FFFFFF" fill="#FFFFFF"><path d="M4.5,3.5 H8.5 Q12.5,3.5 12.5,8 Q12.5,12.5 8.5,12.5 H4.5 Z" fill="none" stroke-width="1.6"/><path d="M0,5.5 H4 M0,10.5 H4 M13,8.5 H16" fill="none" stroke-width="1.1"/></g><g stroke="#ACA899" fill="#ACA899"><path d="M4.5,3.5 H8.5 Q12.5,3.5 12.5,8 Q12.5,12.5 8.5,12.5 H4.5 Z" fill="none" stroke-width="1.6"/><path d="M0,5.5 H4 M0,10.5 H4 M13,8.5 H16" fill="none" stroke-width="1.1"/></g></g>
<g transform="translate(755,53)"><g transform="translate(1,1)" stroke="#FFFFFF" fill="#FFFFFF"><path d="M5.5,15.5 L0.5,10.5 L1.5,9.5 L4,10.5 L2.5,3.5 L4,2.5 L6.5,7.5 L6,2 L7.5,1 L9.5,6.5 L10.5,2.5 L12,2.5 L12.5,7.5 L14,5.5 L15.5,7 L13.5,12.5 L12.5,15.5 Z" fill="none"/><path d="M8,4 L9.5,8.5 M11,5 L11.5,9" fill="none"/></g><g stroke="#ACA899" fill="#ACA899"><path d="M5.5,15.5 L0.5,10.5 L1.5,9.5 L4,10.5 L2.5,3.5 L4,2.5 L6.5,7.5 L6,2 L7.5,1 L9.5,6.5 L10.5,2.5 L12,2.5 L12.5,7.5 L14,5.5 L15.5,7 L13.5,12.5 L12.5,15.5 Z" fill="none"/><path d="M8,4 L9.5,8.5 M11,5 L11.5,9" fill="none"/></g></g>
<g transform="translate(778,53)"><g transform="translate(1,1)" stroke="#FFFFFF" fill="#FFFFFF"><path d="M4.5,12.5 L1.5,8.5 V5.5 L2.5,4.5 H11.5 L13.5,6.5 V9.5 L11.5,12.5 Z" fill="none"/><path d="M4.5,4 V7 M7.5,4 V7 M10.5,4 V7 M4.5,12.5 V14.5 H11.5 V12.5" fill="none"/></g><g stroke="#ACA899" fill="#ACA899"><path d="M4.5,12.5 L1.5,8.5 V5.5 L2.5,4.5 H11.5 L13.5,6.5 V9.5 L11.5,12.5 Z" fill="none"/><path d="M4.5,4 V7 M7.5,4 V7 M10.5,4 V7 M4.5,12.5 V14.5 H11.5 V12.5" fill="none"/></g></g>
<g transform="translate(801,53)">
<path d="M3.8,6.5 A5.2,5.2 0 1 1 5,13.6" fill="none" stroke="#000" stroke-width="1.3"/>
<path d="M6,4.2 A5.2,5.2 0 0 1 12.5,5.5" fill="none" stroke="#A0A000" stroke-width="1"/>
<polygon points="0.5,5 5,9.5 0.5,10" fill="#000"/>
</g>
<g transform="translate(824,53)"><g transform="translate(1,1)" stroke="#FFFFFF" fill="#FFFFFF"><path d="M12.2,6.5 A5.2,5.2 0 1 0 11,13.6" fill="none" stroke-width="1.2"/><polygon points="15.5,5 11,9.5 15.5,10" stroke="none"/></g><g stroke="#ACA899" fill="#ACA899"><path d="M12.2,6.5 A5.2,5.2 0 1 0 11,13.6" fill="none" stroke-width="1.2"/><polygon points="15.5,5 11,9.5 15.5,10" stroke="none"/></g></g>
<g transform="translate(847,53)"><g transform="translate(1,1)" stroke="#FFFFFF" fill="#FFFFFF"><path d="M1,6.5 V15 M1,7 H5 M1,10.5 H4.5 M1,14.5 H5" fill="none" stroke-width="1.8"/><path d="M6.5,9 H14.5 M7,9 V13 M10.5,9 V13 M14,9 V13" fill="none" stroke-width="1.6"/><path d="M2.5,5 L5,2.5 H10 L12.5,4.5" fill="none" stroke-width="1.1"/><path d="M10.5,5 H13.5 V2" fill="none" stroke-width="1.2"/></g><g stroke="#ACA899" fill="#ACA899"><path d="M1,6.5 V15 M1,7 H5 M1,10.5 H4.5 M1,14.5 H5" fill="none" stroke-width="1.8"/><path d="M6.5,9 H14.5 M7,9 V13 M10.5,9 V13 M14,9 V13" fill="none" stroke-width="1.6"/><path d="M2.5,5 L5,2.5 H10 L12.5,4.5" fill="none" stroke-width="1.1"/><path d="M10.5,5 H13.5 V2" fill="none" stroke-width="1.2"/></g></g>
<g transform="translate(870,53)"><g transform="translate(1,1)" stroke="#FFFFFF" fill="#FFFFFF"><path d="M1,6.5 V15 M1,7 H5 M1,10.5 H4.5 M1,14.5 H5 M15,6.5 V15 M15,7 H11 M15,10.5 H11.5 M15,14.5 H11" fill="none" stroke-width="1.8"/><path d="M2.5,5 L5,2.5 H10 L12.5,4.5" fill="none" stroke-width="1.1"/><path d="M10.5,5 H13.5 V2" fill="none" stroke-width="1.2"/></g><g stroke="#ACA899" fill="#ACA899"><path d="M1,6.5 V15 M1,7 H5 M1,10.5 H4.5 M1,14.5 H5 M15,6.5 V15 M15,7 H11 M15,10.5 H11.5 M15,14.5 H11" fill="none" stroke-width="1.8"/><path d="M2.5,5 L5,2.5 H10 L12.5,4.5" fill="none" stroke-width="1.1"/><path d="M10.5,5 H13.5 V2" fill="none" stroke-width="1.2"/></g></g>
<g transform="translate(893,53)"><g transform="translate(1,1)" stroke="#FFFFFF" fill="#FFFFFF"><path d="M0.5,14.5 L6.5,3 H8 L7.5,14 M3.5,10 H7.5 M12.5,8.5 Q9,8 9,12 Q9,14.5 11,13.5 L13,9 L12.5,13.5 H15" fill="none" stroke-width="1.6"/></g><g stroke="#ACA899" fill="#ACA899"><path d="M0.5,14.5 L6.5,3 H8 L7.5,14 M3.5,10 H7.5 M12.5,8.5 Q9,8 9,12 Q9,14.5 11,13.5 L13,9 L12.5,13.5 H15" fill="none" stroke-width="1.6"/></g></g>
<g transform="translate(916,53)"><g transform="translate(1,1)" stroke="#FFFFFF" fill="#FFFFFF"><rect x="1" y="11" width="1" height="1" stroke="none"/><path d="M3.5,6.5 H6.5 V10.5 H3.5 Z M9,6.5 H13 V10.5 H9 V14.5 L8,15.5" fill="none" stroke-width="1.8"/></g><g stroke="#ACA899" fill="#ACA899"><rect x="1" y="11" width="1" height="1" stroke="none"/><path d="M3.5,6.5 H6.5 V10.5 H3.5 Z M9,6.5 H13 V10.5 H9 V14.5 L8,15.5" fill="none" stroke-width="1.8"/></g></g>
</svg>
</body></html>
